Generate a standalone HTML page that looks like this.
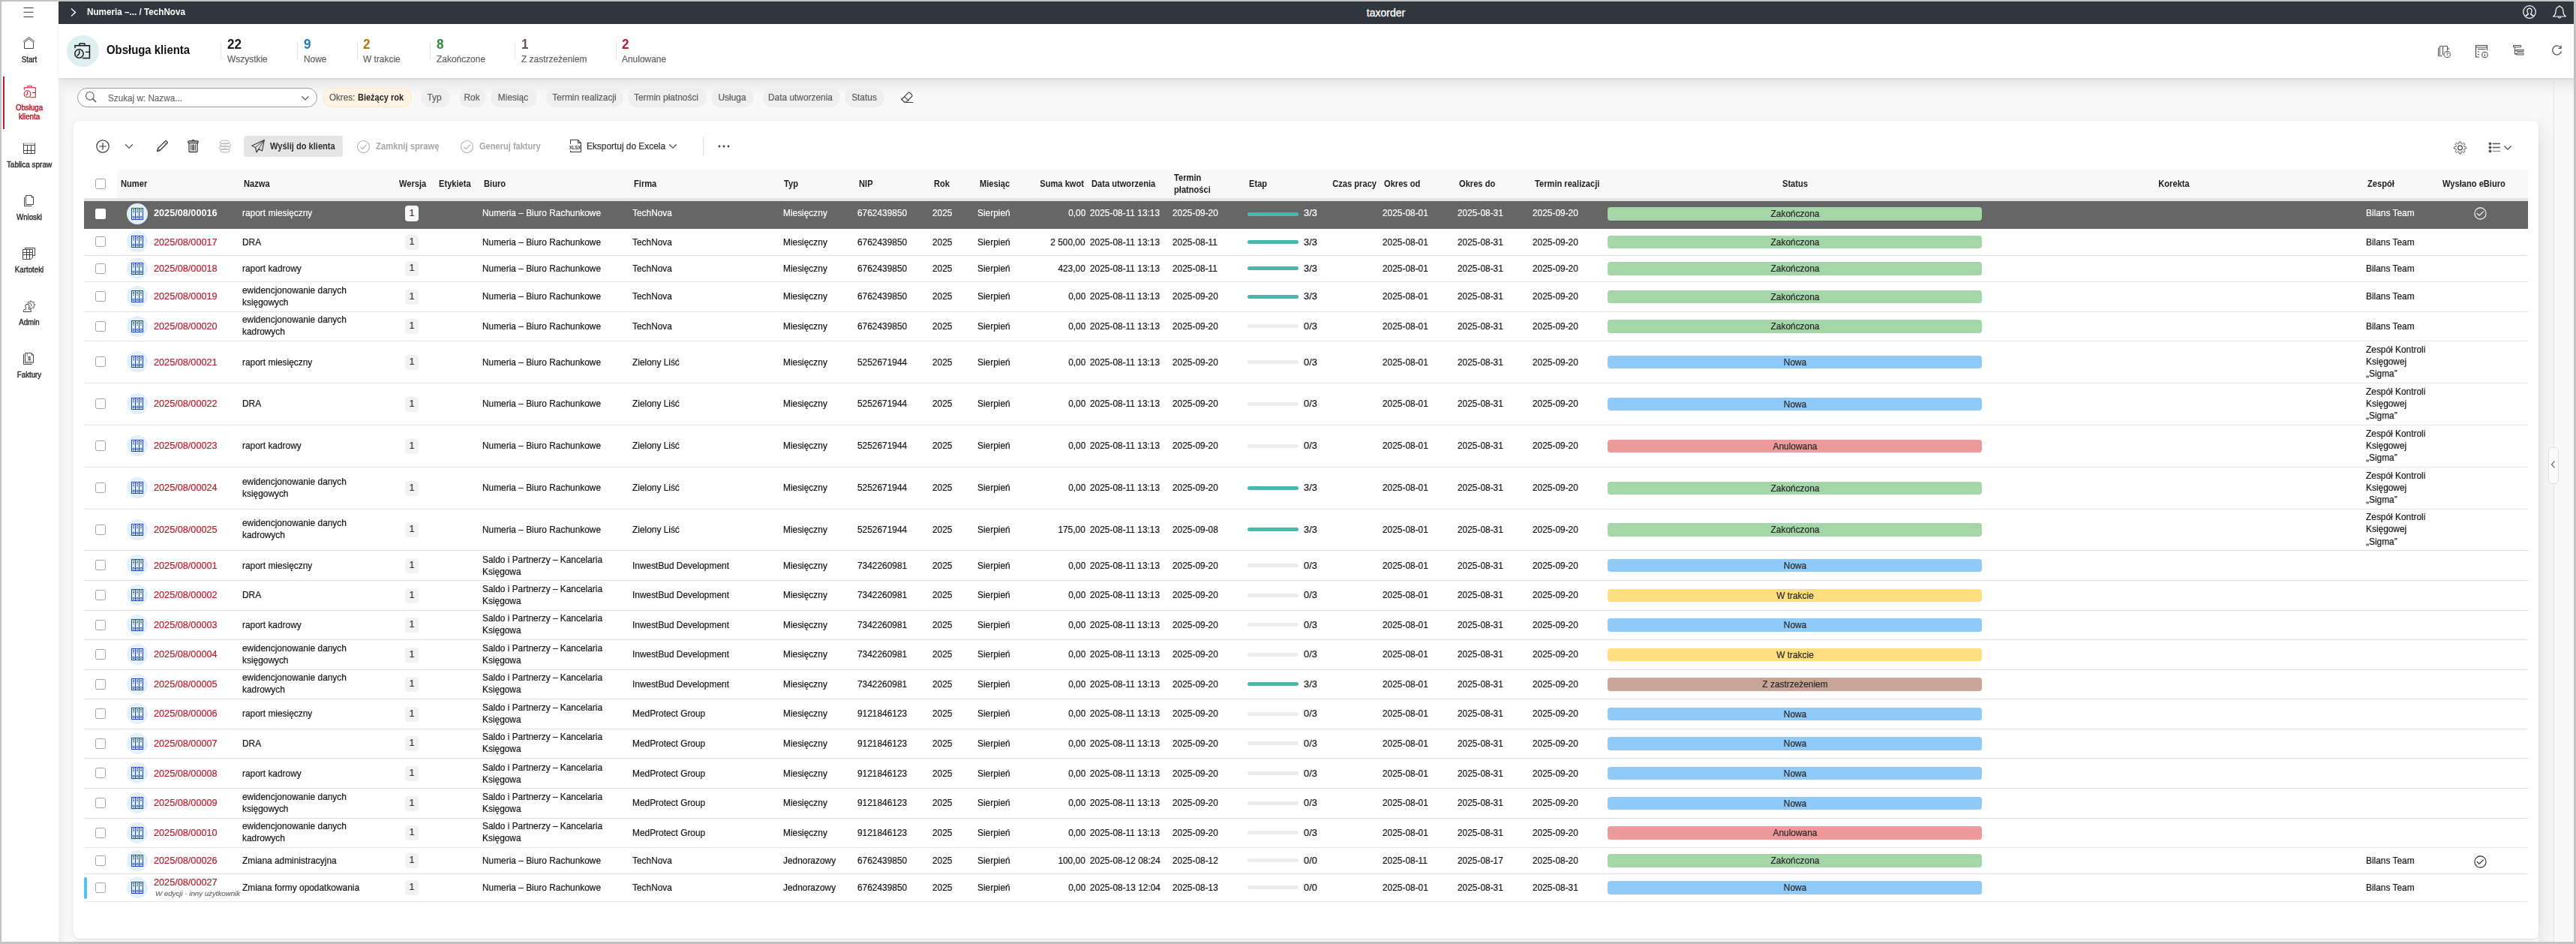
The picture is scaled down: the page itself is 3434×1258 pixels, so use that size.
<!DOCTYPE html><html><head><meta charset="utf-8"><style>
html,body{margin:0;padding:0}
body{width:3434px;height:1258px;position:relative;overflow:hidden;background:#c3c3c3;font-family:"Liberation Sans",sans-serif;}
.t{position:absolute;white-space:nowrap;-webkit-text-stroke:0.2px currentColor;}
.b{position:absolute;box-sizing:border-box;}
</style></head><body>
<div class="b" style="left:2.00px;top:2.00px;width:3429.00px;height:1253.00px;background:#f9f9f9;"></div>
<div class="b" style="left:78.00px;top:104.00px;width:3353.00px;height:22.00px;background:linear-gradient(#e6e6e6,#f9f9f9);"></div>
<div class="b" style="left:78.00px;top:104.00px;width:12.00px;height:1151.00px;background:linear-gradient(90deg,#efefef,rgba(249,249,249,0));"></div>
<div class="b" style="left:2.00px;top:2.00px;width:76.00px;height:1253.00px;background:#ffffff;"></div>
<div class="b" style="left:78.00px;top:2.00px;width:3353.00px;height:30.00px;background:#2f363d;"></div>
<div class="b" style="left:78.00px;top:32.00px;width:3353.00px;height:72.00px;background:#ffffff;box-shadow:0 1px 3px rgba(0,0,0,0.10);"></div>
<div class="b" style="left:3384.00px;top:150.00px;width:20.00px;height:1105.00px;background:linear-gradient(90deg,#efefef,#f5f5f5);-webkit-mask-image:linear-gradient(transparent,#000 40px);"></div>
<div class="b" style="left:3404.00px;top:104.00px;width:1.00px;height:1151.00px;background:#e2e2e2;"></div>
<div class="b" style="left:98.00px;top:161.00px;width:3286.00px;height:1090.00px;background:#ffffff;border-radius:8px;box-shadow:0 1px 2px rgba(0,0,0,0.10),0 0 14px rgba(0,0,0,0.05);"></div>
<svg class="b" style="left:30.00px;top:8.00px;" width="16" height="17" viewBox="0 0 16 17" fill="none"><path d="M1.5 2.5H14.5M1.5 8.3H14.5M1.5 14.5H14.5" stroke="#3a3a3a" stroke-width="1.1"/></svg>
<svg class="b" style="left:30.00px;top:48.00px;" width="18" height="18" viewBox="0 0 18 18" fill="none"><path d="M0.9 7.6L8.6 1.6L16.3 7.6M2.3 8.7L8.6 3.8L14.9 8.7" stroke="#454545" stroke-width="1"/><path d="M2.5 8V16.5H14.5V8" stroke="#454545" stroke-width="1"/></svg>
<div class="t" style="top:73.14px;font-size:10.8px;line-height:13.5px;color:#2a2a2a;left:-561.50px;width:1200px;text-align:center;transform-origin:50% 50%;transform:scaleX(0.9);-webkit-text-stroke:0.4px #2a2a2a;">Start</div>
<div class="b" style="left:4.00px;top:102.00px;width:2.00px;height:70.00px;background:#c1182c;"></div>
<svg class="b" style="left:31.00px;top:113.50px;" width="18" height="17" viewBox="0 0 21 21" fill="none"><path d="M6.5 3.2V1.8Q6.5 1 7.3 1H12.7Q13.5 1 13.5 1.8V3.2" stroke="#c1182c" stroke-width="1.3"/><path d="M1 7V3.5H19.5V19.5H10.5" stroke="#c1182c" stroke-width="1.3"/><circle cx="6.2" cy="13.8" r="5.4" stroke="#c1182c" stroke-width="1.3"/><path d="M6.4 9.8V13.9L3.6 16.6M14.2 11.8H19.5" stroke="#c1182c" stroke-width="1.3"/></svg>
<div class="t" style="top:137.44px;font-size:10.8px;line-height:13.5px;color:#c1182c;left:-560.70px;width:1200px;text-align:center;transform-origin:50% 50%;transform:scaleX(0.9);-webkit-text-stroke:0.45px #c1182c;">Obsługa</div>
<div class="t" style="top:149.04px;font-size:10.8px;line-height:13.5px;color:#c1182c;left:-560.70px;width:1200px;text-align:center;transform-origin:50% 50%;transform:scaleX(0.9);-webkit-text-stroke:0.45px #c1182c;">klienta</div>
<svg class="b" style="left:30.00px;top:190.00px;" width="18" height="16" viewBox="0 0 18 16" fill="none"><path d="M1.5 1V14.5H16.5V1" stroke="#454545" stroke-width="1"/><path d="M1.5 1H16.5" stroke="#454545" stroke-width="1" opacity="0.45"/><path d="M1.5 3.5H16.5M1.5 10.5H16.5M6.5 3.5V14.5M11.5 3.5V14.5" stroke="#454545" stroke-width="1"/></svg>
<div class="t" style="top:213.04px;font-size:10.8px;line-height:13.5px;color:#2a2a2a;left:-561.50px;width:1200px;text-align:center;transform-origin:50% 50%;transform:scaleX(0.92);-webkit-text-stroke:0.4px #2a2a2a;">Tablica spraw</div>
<svg class="b" style="left:30.00px;top:259.00px;" width="18" height="18" viewBox="0 0 18 18" fill="none"><path d="M4.5 1.5H12L14.5 4V13.5H4.5Z" stroke="#454545" stroke-width="1" stroke-linejoin="round"/><path d="M12 1.5V4H14.5M2.5 3.5V15.5H12.5" stroke="#454545" stroke-width="1"/></svg>
<div class="t" style="top:282.94px;font-size:10.8px;line-height:13.5px;color:#2a2a2a;left:-561.50px;width:1200px;text-align:center;transform-origin:50% 50%;transform:scaleX(0.9);-webkit-text-stroke:0.4px #2a2a2a;">Wnioski</div>
<svg class="b" style="left:30.00px;top:329.00px;" width="18" height="18" viewBox="0 0 18 18" fill="none"><path d="M0.5 3.5H13.5V14L11.5 16.5H0.5Z" stroke="#454545" stroke-width="1"/><path d="M0.5 7.5H13.5M0.5 10.5H13.5M5.5 3.5V16.5M9.5 3.5V16.5M3.5 3.5V1.5H16.5V11.5H13.5" stroke="#454545" stroke-width="1"/></svg>
<div class="t" style="top:352.74px;font-size:10.8px;line-height:13.5px;color:#2a2a2a;left:-561.50px;width:1200px;text-align:center;transform-origin:50% 50%;transform:scaleX(0.9);-webkit-text-stroke:0.4px #2a2a2a;">Kartoteki</div>
<svg class="b" style="left:30.00px;top:399.00px;" width="18" height="18" viewBox="0 0 18 18" fill="none"><path d="M16.60 7.30L16.55 7.99L15.16 8.34L15.00 8.83L14.76 9.30L15.50 10.53L15.05 11.05L14.53 11.50L13.30 10.76L12.83 11.00L12.34 11.16L11.99 12.55L11.30 12.60L10.61 12.55L10.26 11.16L9.77 11.00L9.30 10.76L8.07 11.50L7.55 11.05L7.10 10.53L7.84 9.30L7.60 8.83L7.44 8.34L6.05 7.99L6.00 7.30L6.05 6.61L7.44 6.26L7.60 5.77L7.84 5.30L7.10 4.07L7.55 3.55L8.07 3.10L9.30 3.84L9.77 3.60L10.26 3.44L10.61 2.05L11.30 2.00L11.99 2.05L12.34 3.44L12.83 3.60L13.30 3.84L14.53 3.10L15.05 3.55L15.50 4.07L14.76 5.30L15.00 5.77L15.16 6.26L16.55 6.61Z" stroke="#454545" stroke-width="1" stroke-linejoin="round"/><path d="M9.2 5.4Q11.2 4.8 11.8 6.8Q12.2 8.6 10.5 9.6" stroke="#454545" stroke-width="1"/><path d="M1.2 16.5V15.2Q1.2 13.6 3 13.4L4.6 13.1V11.8Q4 10.8 4 9.2V7.9Q4 6.5 6.4 6.5Q8.8 6.5 8.8 7.9V9.2Q8.8 10.8 8.2 11.8V13.1L9.8 13.4Q11.4 13.6 11.4 15.2V16.5Z" fill="#ffffff" stroke="#454545" stroke-width="1" stroke-linejoin="round"/></svg>
<div class="t" style="top:422.64px;font-size:10.8px;line-height:13.5px;color:#2a2a2a;left:-561.50px;width:1200px;text-align:center;transform-origin:50% 50%;transform:scaleX(0.9);-webkit-text-stroke:0.4px #2a2a2a;">Admin</div>
<svg class="b" style="left:30.00px;top:469.00px;" width="18" height="18" viewBox="0 0 18 18" fill="none"><path d="M3.5 1.5H12L14.5 4V14.5H3.5Z" stroke="#454545" stroke-width="1" stroke-linejoin="round"/><path d="M12 1.5V4H14.5M1.5 3V16.5H12.5M5.5 3H7M5.5 5H7" stroke="#454545" stroke-width="1"/><path d="M5 12.5H13" stroke="#454545" stroke-width="1" opacity="0.5"/><text x="9" y="11" font-size="7.5" font-weight="700" text-anchor="middle" fill="#454545" font-family="Liberation Sans">$</text></svg>
<div class="t" style="top:492.54px;font-size:10.8px;line-height:13.5px;color:#2a2a2a;left:-561.50px;width:1200px;text-align:center;transform-origin:50% 50%;transform:scaleX(0.9);-webkit-text-stroke:0.4px #2a2a2a;">Faktury</div>
<svg class="b" style="left:92.00px;top:10.00px;" width="12" height="13" viewBox="0 0 12 13" fill="none"><path d="M3 1.5L8.5 6.5L3 11.5" stroke="#ffffff" stroke-width="1.4"/></svg>
<div class="t" style="top:7.71px;font-size:13px;line-height:16.25px;color:#ffffff;font-weight:700;-webkit-text-stroke:0;left:115.80px;transform-origin:0 50%;transform:scaleX(0.899);">Numeria –... / TechNova</div>
<div class="t" style="top:8.50px;font-size:14px;line-height:17.5px;color:#ffffff;left:1247.50px;width:1200px;text-align:center;transform-origin:50% 50%;-webkit-text-stroke:0.3px #ffffff;">taxorder</div>
<svg class="b" style="left:3362.00px;top:6.00px;" width="20" height="20" viewBox="0 0 20 20" fill="none"><circle cx="10" cy="10" r="8.3" stroke="#fff" stroke-width="1.2"/><path d="M6.5 15.5V13.8L8.6 12.6Q7 11.2 7 8.6Q7 5.2 10 5.2Q13 5.2 13 8.6Q13 11.2 11.4 12.6L13.5 13.8V15.5M4.2 15.3Q6.5 13.8 8.6 13.2M15.8 15.3Q13.5 13.8 11.4 13.2" stroke="#fff" stroke-width="1.2" stroke-linejoin="round"/></svg>
<svg class="b" style="left:3402.00px;top:6.00px;" width="20" height="20" viewBox="0 0 20 20" fill="none"><path d="M10 1.8Q11 1.8 11 3Q15 4 15 9.5Q15 13.5 18.5 16H1.5Q5 13.5 5 9.5Q5 4 9 3Q9 1.8 10 1.8Z" stroke="#fff" stroke-width="1.2" stroke-linejoin="round"/><path d="M8.3 16.5Q8.3 18 10 18Q11.7 18 11.7 16.5" stroke="#fff" stroke-width="1.2"/></svg>
<div class="b" style="left:89.00px;top:47.00px;width:43.00px;height:42.00px;background:#ddeff0;border-radius:50%;"></div>
<svg class="b" style="left:99.00px;top:57.00px;" width="22" height="22" viewBox="0 0 21 21" fill="none"><path d="M6.5 3.2V1.8Q6.5 1 7.3 1H12.7Q13.5 1 13.5 1.8V3.2" stroke="#111111" stroke-width="1.4"/><path d="M1 7V3.5H19.5V19.5H10.5" stroke="#111111" stroke-width="1.4"/><circle cx="6.2" cy="13.8" r="5.4" stroke="#111111" stroke-width="1.4"/><path d="M6.4 9.8V13.9L3.6 16.6M14.2 11.8H19.5" stroke="#111111" stroke-width="1.4"/></svg>
<div class="t" style="top:57.29px;font-size:16px;line-height:20.0px;color:#111111;font-weight:700;-webkit-text-stroke:0;left:142.00px;transform-origin:0 50%;transform:scaleX(0.932);">Obsługa klienta</div>
<div class="b" style="left:294.40px;top:56.00px;width:1.00px;height:24.00px;background:#e3e3e3;"></div>
<div class="t" style="top:47.67px;font-size:18px;line-height:22.5px;color:#1b1b1b;font-weight:700;-webkit-text-stroke:0;left:302.70px;transform-origin:0 50%;transform:scaleX(0.95);">22</div>
<div class="t" style="top:71.21px;font-size:13px;line-height:16.25px;color:#616161;left:302.70px;transform-origin:0 50%;transform:scaleX(0.918);">Wszystkie</div>
<div class="b" style="left:396.20px;top:56.00px;width:1.00px;height:24.00px;background:#e3e3e3;"></div>
<div class="t" style="top:47.67px;font-size:18px;line-height:22.5px;color:#1d79b8;font-weight:700;-webkit-text-stroke:0;left:404.50px;transform-origin:0 50%;transform:scaleX(0.95);">9</div>
<div class="t" style="top:71.21px;font-size:13px;line-height:16.25px;color:#616161;left:404.50px;transform-origin:0 50%;transform:scaleX(0.918);">Nowe</div>
<div class="b" style="left:475.70px;top:56.00px;width:1.00px;height:24.00px;background:#e3e3e3;"></div>
<div class="t" style="top:47.67px;font-size:18px;line-height:22.5px;color:#b8750c;font-weight:700;-webkit-text-stroke:0;left:484.00px;transform-origin:0 50%;transform:scaleX(0.95);">2</div>
<div class="t" style="top:71.21px;font-size:13px;line-height:16.25px;color:#616161;left:484.00px;transform-origin:0 50%;transform:scaleX(0.918);">W trakcie</div>
<div class="b" style="left:573.40px;top:56.00px;width:1.00px;height:24.00px;background:#e3e3e3;"></div>
<div class="t" style="top:47.67px;font-size:18px;line-height:22.5px;color:#2f8a3c;font-weight:700;-webkit-text-stroke:0;left:581.70px;transform-origin:0 50%;transform:scaleX(0.95);">8</div>
<div class="t" style="top:71.21px;font-size:13px;line-height:16.25px;color:#616161;left:581.70px;transform-origin:0 50%;transform:scaleX(0.918);">Zakończone</div>
<div class="b" style="left:686.30px;top:56.00px;width:1.00px;height:24.00px;background:#e3e3e3;"></div>
<div class="t" style="top:47.67px;font-size:18px;line-height:22.5px;color:#6b5252;font-weight:700;-webkit-text-stroke:0;left:694.60px;transform-origin:0 50%;transform:scaleX(0.95);">1</div>
<div class="t" style="top:71.21px;font-size:13px;line-height:16.25px;color:#616161;left:694.60px;transform-origin:0 50%;transform:scaleX(0.918);">Z zastrzeżeniem</div>
<div class="b" style="left:821.00px;top:56.00px;width:1.00px;height:24.00px;background:#e3e3e3;"></div>
<div class="t" style="top:47.67px;font-size:18px;line-height:22.5px;color:#c1182c;font-weight:700;-webkit-text-stroke:0;left:829.30px;transform-origin:0 50%;transform:scaleX(0.95);">2</div>
<div class="t" style="top:71.21px;font-size:13px;line-height:16.25px;color:#616161;left:829.30px;transform-origin:0 50%;transform:scaleX(0.918);">Anulowane</div>
<svg class="b" style="left:3248.00px;top:59.00px;" width="22" height="20" viewBox="0 0 22 20" fill="none"><path d="M2.5 4.5V15.5H7.5" stroke="#4a4a4a" stroke-width="1"/><path d="M4.5 14V2.5Q7 1.8 8.5 3Q10.5 1.8 14.5 2.5V8.5M8.5 3V14" stroke="#4a4a4a" stroke-width="1"/><path d="M16.2 4.5V7.5" stroke="#4a4a4a" stroke-width="1"/><circle cx="14.2" cy="13.5" r="4.1" stroke="#4a4a4a" stroke-width="1"/><path d="M12.9 12.3Q12.9 11 14.2 11Q15.5 11 15.5 12.2Q15.5 13.1 14.2 13.7V14.6M14.2 15.6V16.2" stroke="#4a4a4a" stroke-width="0.9"/></svg>
<svg class="b" style="left:3299.00px;top:59.00px;" width="20" height="19" viewBox="0 0 20 19" fill="none"><path d="M1.5 11V17H6M1.5 11V1.5H16.5V8" stroke="#4a4a4a" stroke-width="1.2"/><path d="M1.5 4H16.5M4 6.5H14.5M4 10H6M4 13.5H6" stroke="#4a4a4a" stroke-width="1.2"/><circle cx="13.5" cy="14" r="3.8" stroke="#4a4a4a" stroke-width="1.1"/><path d="M13.5 13V16.2M13.5 11.4V11.9" stroke="#4a4a4a" stroke-width="1"/></svg>
<svg class="b" style="left:3349.00px;top:59.00px;" width="18" height="17" viewBox="0 0 18 17" fill="none"><rect x="1.5" y="1.5" width="10" height="2.2" rx="0.6" stroke="#4a4a4a" stroke-width="1.1"/><rect x="6" y="7.2" width="9" height="2.2" rx="0.6" stroke="#4a4a4a" stroke-width="1.1"/><rect x="6" y="11.8" width="9" height="2.2" rx="0.6" stroke="#4a4a4a" stroke-width="1.1"/><path d="M3.5 3.7V12.9H6M3.5 8.3H6" stroke="#4a4a4a" stroke-width="1.1"/></svg>
<svg class="b" style="left:3400.00px;top:59.00px;" width="17" height="17" viewBox="0 0 17 17" fill="none"><path d="M13.8 4.8A6 6 0 1 0 14.5 9.5" stroke="#4a4a4a" stroke-width="1.2"/><path d="M14 1.8V5.3H10.5" stroke="#4a4a4a" stroke-width="1.2"/></svg>
<div class="b" style="left:103.00px;top:117.00px;width:320.00px;height:26.00px;background:#ffffff;border:1px solid #9a9a9a;border-radius:13px;"></div>
<svg class="b" style="left:112.00px;top:120.00px;" width="20" height="20" viewBox="0 0 20 20" fill="none"><circle cx="7.8" cy="7.8" r="5.3" stroke="#555" stroke-width="1.1"/><path d="M11.6 11.6L16 16" stroke="#555" stroke-width="1.6"/></svg>
<div class="t" style="top:122.71px;font-size:13px;line-height:16.25px;color:#6b6b6b;left:144.00px;transform-origin:0 50%;transform:scaleX(0.901);">Szukaj w: Nazwa...</div>
<svg class="b" style="left:401.00px;top:126.00px;" width="12" height="9" viewBox="0 0 12 9" fill="none"><path d="M1.5 2.5L6 7L10.5 2.5" stroke="#555" stroke-width="1.1"/></svg>
<div class="b" style="left:429.50px;top:117.00px;width:119.10px;height:26.00px;background:#fff4e3;border:1px solid #fce7c3;border-radius:13px;"></div>
<div class="t" style="top:122.31px;font-size:13px;line-height:16.25px;color:#5a5a5a;left:439.30px;transform-origin:0 50%;transform:scaleX(0.895);">Okres:</div>
<div class="t" style="top:122.31px;font-size:13px;line-height:16.25px;color:#1f1f1f;font-weight:700;-webkit-text-stroke:0;left:476.80px;transform-origin:0 50%;transform:scaleX(0.845);">Bieżący rok</div>
<div class="b" style="left:560.70px;top:117.00px;width:39.10px;height:26.00px;background:#efefef;border-radius:13px;"></div>
<div class="t" style="top:122.31px;font-size:13px;line-height:16.25px;color:#5c5c5c;left:-20.55px;width:1200px;text-align:center;transform-origin:50% 50%;transform:scaleX(0.915);">Typ</div>
<div class="b" style="left:611.90px;top:117.00px;width:35.80px;height:26.00px;background:#efefef;border-radius:13px;"></div>
<div class="t" style="top:122.31px;font-size:13px;line-height:16.25px;color:#5c5c5c;left:29.00px;width:1200px;text-align:center;transform-origin:50% 50%;transform:scaleX(0.915);">Rok</div>
<div class="b" style="left:654.00px;top:117.00px;width:61.50px;height:26.00px;background:#efefef;border-radius:13px;"></div>
<div class="t" style="top:122.31px;font-size:13px;line-height:16.25px;color:#5c5c5c;left:83.95px;width:1200px;text-align:center;transform-origin:50% 50%;transform:scaleX(0.915);">Miesiąc</div>
<div class="b" style="left:728.00px;top:117.00px;width:102.60px;height:26.00px;background:#efefef;border-radius:13px;"></div>
<div class="t" style="top:122.31px;font-size:13px;line-height:16.25px;color:#5c5c5c;left:178.50px;width:1200px;text-align:center;transform-origin:50% 50%;transform:scaleX(0.915);">Termin realizacji</div>
<div class="b" style="left:836.80px;top:117.00px;width:104.80px;height:26.00px;background:#efefef;border-radius:13px;"></div>
<div class="t" style="top:122.31px;font-size:13px;line-height:16.25px;color:#5c5c5c;left:288.40px;width:1200px;text-align:center;transform-origin:50% 50%;transform:scaleX(0.915);">Termin płatności</div>
<div class="b" style="left:947.80px;top:117.00px;width:57.20px;height:26.00px;background:#efefef;border-radius:13px;"></div>
<div class="t" style="top:122.31px;font-size:13px;line-height:16.25px;color:#5c5c5c;left:375.60px;width:1200px;text-align:center;transform-origin:50% 50%;transform:scaleX(0.915);">Usługa</div>
<div class="b" style="left:1016.60px;top:117.00px;width:103.20px;height:26.00px;background:#efefef;border-radius:13px;"></div>
<div class="t" style="top:122.31px;font-size:13px;line-height:16.25px;color:#5c5c5c;left:467.40px;width:1200px;text-align:center;transform-origin:50% 50%;transform:scaleX(0.915);">Data utworzenia</div>
<div class="b" style="left:1126.00px;top:117.00px;width:53.40px;height:26.00px;background:#efefef;border-radius:13px;"></div>
<div class="t" style="top:122.31px;font-size:13px;line-height:16.25px;color:#5c5c5c;left:551.90px;width:1200px;text-align:center;transform-origin:50% 50%;transform:scaleX(0.915);">Status</div>
<svg class="b" style="left:1199.00px;top:119.00px;" width="21" height="21" viewBox="0 0 21 21" fill="none"><path d="M3 13.5L11.8 4.7Q12.8 3.7 13.8 4.7L16.6 7.5Q17.6 8.5 16.6 9.5L9 17.2H6.6L3 13.5Q2 12.5 3 13.5Z" stroke="#444" stroke-width="1.2" stroke-linejoin="round"/><path d="M6.6 17.5H18.5M6.8 9.8L12.6 15.6" stroke="#444" stroke-width="1.2"/></svg>
<svg class="b" style="left:127.00px;top:185.00px;" width="20" height="20" viewBox="0 0 20 20" fill="none"><circle cx="10" cy="10" r="8.2" stroke="#3d3d3d" stroke-width="1.2"/><path d="M10 5.2V14.8M5.2 10H14.8" stroke="#3d3d3d" stroke-width="1.2"/></svg>
<svg class="b" style="left:166.00px;top:191.00px;" width="12" height="8" viewBox="0 0 12 8" fill="none"><path d="M1.2 1.5L6 6.3L10.8 1.5" stroke="#3d3d3d" stroke-width="1.1"/></svg>
<svg class="b" style="left:207.00px;top:186.00px;" width="18" height="18" viewBox="0 0 18 18" fill="none"><path d="M2.5 15.5L3.5 11.8L13.2 2.1Q14 1.3 14.8 2.1L15.9 3.2Q16.7 4 15.9 4.8L6.2 14.5Z" stroke="#3d3d3d" stroke-width="1.3" stroke-linejoin="round"/><path d="M12 3.3L14.7 6M3.5 11.8L6.2 14.5" stroke="#3d3d3d" stroke-width="1"/></svg>
<svg class="b" style="left:249.00px;top:185.00px;" width="17" height="19" viewBox="0 0 17 19" fill="none"><path d="M3 5.5V16.5Q3 17.5 4 17.5H13Q14 17.5 14 16.5V5.5" stroke="#3d3d3d" stroke-width="1.3"/><rect x="1.8" y="3" width="13.4" height="2.5" rx="1" stroke="#3d3d3d" stroke-width="1.3"/><path d="M7 3V1.5H10V3M5.5 7.5V15.5M7.2 7.5V15.5M8.5 7.5V15.5M9.8 7.5V15.5M11.5 7.5V15.5" stroke="#3d3d3d" stroke-width="0.9"/></svg>
<svg class="b" style="left:290.00px;top:186.00px;" width="20" height="18" viewBox="0 0 20 18" fill="none"><ellipse cx="9.5" cy="3.5" rx="6.5" ry="2.4" stroke="#b3b3b3" stroke-width="1"/><ellipse cx="10.5" cy="7.3" rx="7.5" ry="2.4" stroke="#b3b3b3" stroke-width="1"/><ellipse cx="9.5" cy="11" rx="7.5" ry="2.4" stroke="#b3b3b3" stroke-width="1"/><ellipse cx="10" cy="14.6" rx="6.5" ry="2.4" stroke="#b3b3b3" stroke-width="1"/></svg>
<div class="b" style="left:325.20px;top:181.20px;width:131.60px;height:27.40px;background:#e5e5e5;border-radius:4px;"></div>
<svg class="b" style="left:334.00px;top:185.00px;" width="20" height="20" viewBox="0 0 20 20" fill="none"><path d="M18.3 1.5L1.8 9.3L6.5 11.5L8 18L10.8 13.6L15.5 16Z" stroke="#3d3d3d" stroke-width="1.2" stroke-linejoin="round"/><path d="M6.5 11.5L18.3 1.5L8 18" stroke="#3d3d3d" stroke-width="1"/></svg>
<div class="t" style="top:186.61px;font-size:13px;line-height:16.25px;color:#2e2e2e;font-weight:700;-webkit-text-stroke:0;left:360.20px;transform-origin:0 50%;transform:scaleX(0.853);">Wyślij do klienta</div>
<svg class="b" style="left:475.00px;top:186.00px;" width="19" height="19" viewBox="0 0 19 19" fill="none"><circle cx="9.5" cy="9.5" r="8" stroke="#b0b0b0" stroke-width="1.1"/><path d="M5.5 9.8L8.3 12.6L13.6 6.8" stroke="#b0b0b0" stroke-width="1.1"/></svg>
<div class="t" style="top:186.61px;font-size:13px;line-height:16.25px;color:#a7a7a7;font-weight:700;-webkit-text-stroke:0;left:500.50px;transform-origin:0 50%;transform:scaleX(0.866);">Zamknij sprawę</div>
<svg class="b" style="left:613.00px;top:186.00px;" width="19" height="19" viewBox="0 0 19 19" fill="none"><circle cx="9.5" cy="9.5" r="8" stroke="#b0b0b0" stroke-width="1.1"/><path d="M5.5 9.8L8.3 12.6L13.6 6.8" stroke="#b0b0b0" stroke-width="1.1"/></svg>
<div class="t" style="top:186.61px;font-size:13px;line-height:16.25px;color:#a7a7a7;font-weight:700;-webkit-text-stroke:0;left:638.60px;transform-origin:0 50%;transform:scaleX(0.851);">Generuj faktury</div>
<svg class="b" style="left:756.00px;top:185.00px;" width="21" height="19" viewBox="0 0 21 19" fill="none"><path d="M4.5 7V1.5H14.5L18.5 5.5V17.5H4.5V15.5M14.5 1.5V5.5H18.5" stroke="#3d3d3d" stroke-width="1.1"/><text x="10.5" y="14" font-size="6.3" font-weight="700" text-anchor="middle" fill="#3d3d3d" font-family="Liberation Sans" transform="translate(10.5 0) scale(0.95 1) translate(-10.5 0)">XLSX</text></svg>
<div class="t" style="top:186.61px;font-size:13px;line-height:16.25px;color:#2e2e2e;left:782.40px;transform-origin:0 50%;transform:scaleX(0.914);">Eksportuj do Excela</div>
<svg class="b" style="left:891.00px;top:191.00px;" width="12" height="8" viewBox="0 0 12 8" fill="none"><path d="M1.2 1.5L6 6.3L10.8 1.5" stroke="#3d3d3d" stroke-width="1.1"/></svg>
<div class="b" style="left:937.00px;top:182.00px;width:1.00px;height:26.00px;background:#dcdcdc;"></div>
<svg class="b" style="left:956.00px;top:192.00px;" width="18" height="6" viewBox="0 0 18 6" fill="none"><circle cx="3" cy="3" r="1.4" fill="#3d3d3d"/><circle cx="9" cy="3" r="1.4" fill="#3d3d3d"/><circle cx="15" cy="3" r="1.4" fill="#3d3d3d"/></svg>
<svg class="b" style="left:3270.00px;top:188.00px;" width="19" height="18" viewBox="0 0 19 18" fill="none"><path d="M17.65 9.00L17.64 9.32L17.62 9.64L17.59 9.96L17.15 10.21L16.27 10.35L15.38 10.41L14.94 10.53L14.87 10.75L14.80 10.96L14.72 11.16L14.63 11.37L14.53 11.57L14.43 11.76L14.66 12.16L15.24 12.83L15.77 13.56L15.90 14.05L15.70 14.29L15.48 14.53L15.26 14.76L15.03 14.98L14.79 15.20L14.55 15.40L14.06 15.27L13.33 14.74L12.66 14.16L12.26 13.93L12.07 14.03L11.87 14.13L11.66 14.22L11.46 14.30L11.25 14.37L11.03 14.44L10.91 14.88L10.85 15.77L10.71 16.65L10.46 17.09L10.14 17.12L9.82 17.14L9.50 17.15L9.18 17.14L8.86 17.12L8.54 17.09L8.29 16.65L8.15 15.77L8.09 14.88L7.97 14.44L7.75 14.37L7.54 14.30L7.34 14.22L7.13 14.13L6.93 14.03L6.74 13.93L6.34 14.16L5.67 14.74L4.94 15.27L4.45 15.40L4.21 15.20L3.97 14.98L3.74 14.76L3.52 14.53L3.30 14.29L3.10 14.05L3.23 13.56L3.76 12.83L4.34 12.16L4.57 11.76L4.47 11.57L4.37 11.37L4.28 11.16L4.20 10.96L4.13 10.75L4.06 10.53L3.62 10.41L2.73 10.35L1.85 10.21L1.41 9.96L1.38 9.64L1.36 9.32L1.35 9.00L1.36 8.68L1.38 8.36L1.41 8.04L1.85 7.79L2.73 7.65L3.62 7.59L4.06 7.47L4.13 7.25L4.20 7.04L4.28 6.84L4.37 6.63L4.47 6.43L4.57 6.24L4.34 5.84L3.76 5.17L3.23 4.44L3.10 3.95L3.30 3.71L3.52 3.47L3.74 3.24L3.97 3.02L4.21 2.80L4.45 2.60L4.94 2.73L5.67 3.26L6.34 3.84L6.74 4.07L6.93 3.97L7.13 3.87L7.34 3.78L7.54 3.70L7.75 3.63L7.97 3.56L8.09 3.12L8.15 2.23L8.29 1.35L8.54 0.91L8.86 0.88L9.18 0.86L9.50 0.85L9.82 0.86L10.14 0.88L10.46 0.91L10.71 1.35L10.85 2.23L10.91 3.12L11.03 3.56L11.25 3.63L11.46 3.70L11.66 3.78L11.87 3.87L12.07 3.97L12.26 4.07L12.66 3.84L13.33 3.26L14.06 2.73L14.55 2.60L14.79 2.80L15.03 3.02L15.26 3.24L15.48 3.47L15.70 3.71L15.90 3.95L15.77 4.44L15.24 5.17L14.66 5.84L14.43 6.24L14.53 6.43L14.63 6.63L14.72 6.84L14.80 7.04L14.87 7.25L14.94 7.47L15.38 7.59L16.27 7.65L17.15 7.79L17.59 8.04L17.62 8.36L17.64 8.68Z" stroke="#3d3d3d" stroke-width="1" stroke-linejoin="round"/><circle cx="9.5" cy="9" r="2.9" stroke="#3d3d3d" stroke-width="1.1"/></svg>
<svg class="b" style="left:3317.00px;top:189.00px;" width="18" height="16" viewBox="0 0 18 16" fill="none"><circle cx="2.5" cy="2.5" r="1.7" fill="#444" stroke="#777" stroke-width="0.6"/><circle cx="2.5" cy="7.5" r="1.7" fill="#444" stroke="#777" stroke-width="0.6"/><circle cx="2.5" cy="12.5" r="1.7" fill="#444" stroke="#777" stroke-width="0.6"/><path d="M5.8 2.5H16M5.8 7.5H16" stroke="#555" stroke-width="1.3"/><path d="M5.8 12.5H16" stroke="#8a8a8a" stroke-width="1.3"/></svg>
<svg class="b" style="left:3337.00px;top:193.00px;" width="12" height="8" viewBox="0 0 12 8" fill="none"><path d="M1.5 1.5L6 6.2L10.5 1.5" stroke="#3d3d3d" stroke-width="1.1"/></svg>
<div class="b" style="left:156.00px;top:227.00px;width:3214.00px;height:37.00px;background:#f8f8f8;"></div>
<div class="b" style="left:112.00px;top:264.00px;width:3258.00px;height:4.00px;background:#e4e4e4;"></div>
<div class="b" style="left:127.00px;top:238.00px;width:14.00px;height:14.00px;background:#ffffff;border:1.3px solid #a3a3a3;border-radius:2.5px;"></div>
<div class="t" style="top:237.72px;font-size:12.5px;line-height:15.62px;color:#1e1e1e;font-weight:700;-webkit-text-stroke:0;left:161.30px;transform-origin:0 50%;transform:scaleX(0.89);">Numer</div>
<div class="t" style="top:237.72px;font-size:12.5px;line-height:15.62px;color:#1e1e1e;font-weight:700;-webkit-text-stroke:0;left:324.90px;transform-origin:0 50%;transform:scaleX(0.89);">Nazwa</div>
<div class="t" style="top:237.72px;font-size:12.5px;line-height:15.62px;color:#1e1e1e;font-weight:700;-webkit-text-stroke:0;left:532.00px;transform-origin:0 50%;transform:scaleX(0.89);">Wersja</div>
<div class="t" style="top:237.72px;font-size:12.5px;line-height:15.62px;color:#1e1e1e;font-weight:700;-webkit-text-stroke:0;left:584.70px;transform-origin:0 50%;transform:scaleX(0.89);">Etykieta</div>
<div class="t" style="top:237.72px;font-size:12.5px;line-height:15.62px;color:#1e1e1e;font-weight:700;-webkit-text-stroke:0;left:644.90px;transform-origin:0 50%;transform:scaleX(0.89);">Biuro</div>
<div class="t" style="top:237.72px;font-size:12.5px;line-height:15.62px;color:#1e1e1e;font-weight:700;-webkit-text-stroke:0;left:845.20px;transform-origin:0 50%;transform:scaleX(0.89);">Firma</div>
<div class="t" style="top:237.72px;font-size:12.5px;line-height:15.62px;color:#1e1e1e;font-weight:700;-webkit-text-stroke:0;left:1045.40px;transform-origin:0 50%;transform:scaleX(0.89);">Typ</div>
<div class="t" style="top:237.72px;font-size:12.5px;line-height:15.62px;color:#1e1e1e;font-weight:700;-webkit-text-stroke:0;left:1144.90px;transform-origin:0 50%;transform:scaleX(0.89);">NIP</div>
<div class="t" style="top:237.72px;font-size:12.5px;line-height:15.62px;color:#1e1e1e;font-weight:700;-webkit-text-stroke:0;left:1245.20px;transform-origin:0 50%;transform:scaleX(0.89);">Rok</div>
<div class="t" style="top:237.72px;font-size:12.5px;line-height:15.62px;color:#1e1e1e;font-weight:700;-webkit-text-stroke:0;left:1305.50px;transform-origin:0 50%;transform:scaleX(0.89);">Miesiąc</div>
<div class="t" style="top:237.72px;font-size:12.5px;line-height:15.62px;color:#1e1e1e;font-weight:700;-webkit-text-stroke:0;left:1455.20px;transform-origin:0 50%;transform:scaleX(0.89);">Data utworzenia</div>
<div class="t" style="top:237.72px;font-size:12.5px;line-height:15.62px;color:#1e1e1e;font-weight:700;-webkit-text-stroke:0;left:1665.00px;transform-origin:0 50%;transform:scaleX(0.89);">Etap</div>
<div class="t" style="top:237.72px;font-size:12.5px;line-height:15.62px;color:#1e1e1e;font-weight:700;-webkit-text-stroke:0;left:1845.20px;transform-origin:0 50%;transform:scaleX(0.89);">Okres od</div>
<div class="t" style="top:237.72px;font-size:12.5px;line-height:15.62px;color:#1e1e1e;font-weight:700;-webkit-text-stroke:0;left:1945.00px;transform-origin:0 50%;transform:scaleX(0.89);">Okres do</div>
<div class="t" style="top:237.72px;font-size:12.5px;line-height:15.62px;color:#1e1e1e;font-weight:700;-webkit-text-stroke:0;left:2045.50px;transform-origin:0 50%;transform:scaleX(0.89);">Termin realizacji</div>
<div class="t" style="top:237.72px;font-size:12.5px;line-height:15.62px;color:#1e1e1e;font-weight:700;-webkit-text-stroke:0;left:3155.90px;transform-origin:0 50%;transform:scaleX(0.89);">Zespół</div>
<div class="t" style="top:237.72px;font-size:12.5px;line-height:15.62px;color:#1e1e1e;font-weight:700;-webkit-text-stroke:0;left:3255.90px;transform-origin:0 50%;transform:scaleX(0.89);">Wysłano eBiuro</div>
<div class="t" style="top:237.72px;font-size:12.5px;line-height:15.62px;color:#1e1e1e;font-weight:700;-webkit-text-stroke:0;right:1989.10px;text-align:right;transform-origin:100% 50%;transform:scaleX(0.89);">Suma kwot</div>
<div class="t" style="top:237.72px;font-size:12.5px;line-height:15.62px;color:#1e1e1e;font-weight:700;-webkit-text-stroke:0;right:1599.20px;text-align:right;transform-origin:100% 50%;transform:scaleX(0.89);">Czas pracy</div>
<div class="t" style="top:229.82px;font-size:12.5px;line-height:15.8px;color:#1e1e1e;font-weight:700;-webkit-text-stroke:0;left:1565.30px;transform-origin:0 50%;transform:scaleX(0.89);">Termin<br>płatności</div>
<div class="t" style="top:237.72px;font-size:12.5px;line-height:15.62px;color:#1e1e1e;font-weight:700;-webkit-text-stroke:0;left:1792.60px;width:1200px;text-align:center;transform-origin:50% 50%;transform:scaleX(0.89);">Status</div>
<div class="t" style="top:237.72px;font-size:12.5px;line-height:15.62px;color:#1e1e1e;font-weight:700;-webkit-text-stroke:0;left:2297.80px;width:1200px;text-align:center;transform-origin:50% 50%;transform:scaleX(0.89);">Korekta</div>
<div class="b" style="left:112.00px;top:268.00px;width:3258.00px;height:37.00px;background:#666666;"></div>
<div class="b" style="left:127.00px;top:278.00px;width:14.00px;height:14.00px;background:#ffffff;border-radius:2px;"></div>
<div class="b" style="left:169.00px;top:271.00px;width:28.00px;height:28.00px;background:#e3effb;border-radius:50%;"></div>
<svg class="b" style="left:175.00px;top:277.00px;" width="16" height="16" viewBox="0 0 16 16" fill="none"><rect x="0.5" y="0.5" width="15" height="15" stroke="#1c49ab" stroke-width="1"/><path d="M5.5 0.5V15.5M10.5 0.5V15.5" stroke="#1c49ab" stroke-width="1"/><path d="M2.0 2.5H4.0M2.0 4.5H4.0" stroke="#1c49ab" stroke-width="1"/><path d="M2.2 6.5H3.8" stroke="#1c49ab" stroke-width="0.8" opacity="0.7"/><circle cx="3.0" cy="12.4" r="1.25" stroke="#1c49ab" stroke-width="0.9"/><path d="M7.0 2.5H9.0M7.0 4.5H9.0" stroke="#1c49ab" stroke-width="1"/><path d="M7.2 6.5H8.8" stroke="#1c49ab" stroke-width="0.8" opacity="0.7"/><circle cx="8.0" cy="12.4" r="1.25" stroke="#1c49ab" stroke-width="0.9"/><path d="M12.0 2.5H14.0M12.0 4.5H14.0" stroke="#1c49ab" stroke-width="1"/><path d="M12.2 6.5H13.8" stroke="#1c49ab" stroke-width="0.8" opacity="0.7"/><circle cx="13.0" cy="12.4" r="1.25" stroke="#1c49ab" stroke-width="0.9"/></svg>
<div class="t" style="top:275.61px;font-size:13px;line-height:16.25px;color:#ffffff;font-weight:700;-webkit-text-stroke:0;left:205.00px;transform-origin:0 50%;transform:scaleX(0.975);">2025/08/00016</div>
<div class="t" style="top:275.73px;font-size:13px;line-height:16px;color:#ffffff;left:322.80px;transform-origin:0 50%;transform:scaleX(0.915);">raport miesięczny</div>
<div class="b" style="left:540.00px;top:274.00px;width:18.00px;height:21.00px;background:#f9f9f9;border-radius:4px;"></div>
<div class="t" style="top:277.42px;font-size:12.5px;line-height:15.62px;color:#333333;left:-51.00px;width:1200px;text-align:center;transform-origin:50% 50%;">1</div>
<div class="t" style="top:275.73px;font-size:13px;line-height:16px;color:#ffffff;left:643.30px;transform-origin:0 50%;transform:scaleX(0.915);">Numeria – Biuro Rachunkowe</div>
<div class="t" style="top:275.61px;font-size:13px;line-height:16.25px;color:#ffffff;left:843.30px;transform-origin:0 50%;transform:scaleX(0.915);">TechNova</div>
<div class="t" style="top:275.61px;font-size:13px;line-height:16.25px;color:#ffffff;left:1043.50px;transform-origin:0 50%;transform:scaleX(0.915);">Miesięczny</div>
<div class="t" style="top:275.61px;font-size:13px;line-height:16.25px;color:#ffffff;left:1143.30px;transform-origin:0 50%;transform:scaleX(0.915);">6762439850</div>
<div class="t" style="top:275.61px;font-size:13px;line-height:16.25px;color:#ffffff;left:1242.70px;transform-origin:0 50%;transform:scaleX(0.915);">2025</div>
<div class="t" style="top:275.61px;font-size:13px;line-height:16.25px;color:#ffffff;left:1303.00px;transform-origin:0 50%;transform:scaleX(0.915);">Sierpień</div>
<div class="t" style="top:275.61px;font-size:13px;line-height:16.25px;color:#ffffff;right:1987.00px;text-align:right;transform-origin:100% 50%;transform:scaleX(0.915);">0,00</div>
<div class="t" style="top:275.61px;font-size:13px;line-height:16.25px;color:#ffffff;left:1453.00px;transform-origin:0 50%;transform:scaleX(0.915);">2025-08-11 13:13</div>
<div class="t" style="top:275.61px;font-size:13px;line-height:16.25px;color:#ffffff;left:1563.00px;transform-origin:0 50%;transform:scaleX(0.915);">2025-09-20</div>
<div class="b" style="left:1663.00px;top:282.70px;width:68.00px;height:5.00px;background:#4db6ac;border-radius:3px;"></div>
<div class="t" style="top:275.61px;font-size:13px;line-height:16.25px;color:#ffffff;left:1738.40px;transform-origin:0 50%;transform:scaleX(0.99);">3/3</div>
<div class="t" style="top:275.61px;font-size:13px;line-height:16.25px;color:#ffffff;left:1843.00px;transform-origin:0 50%;transform:scaleX(0.915);">2025-08-01</div>
<div class="t" style="top:275.61px;font-size:13px;line-height:16.25px;color:#ffffff;left:1943.00px;transform-origin:0 50%;transform:scaleX(0.915);">2025-08-31</div>
<div class="t" style="top:275.61px;font-size:13px;line-height:16.25px;color:#ffffff;left:2042.80px;transform-origin:0 50%;transform:scaleX(0.915);">2025-09-20</div>
<div class="b" style="left:2143.00px;top:276.40px;width:499.00px;height:17.60px;background:#a5d6a7;border-radius:4px;"></div>
<div class="t" style="top:276.51px;font-size:13px;line-height:16.25px;color:#262626;left:1792.50px;width:1200px;text-align:center;transform-origin:50% 50%;transform:scaleX(0.915);">Zakończona</div>
<div class="t" style="top:275.53px;font-size:13px;line-height:16.4px;color:#ffffff;left:3153.70px;transform-origin:0 50%;transform:scaleX(0.915);">Bilans Team</div>
<svg class="b" style="left:3296.50px;top:275.20px;" width="19" height="19" viewBox="0 0 19 19" fill="none"><circle cx="9.5" cy="9.5" r="7.6" stroke="#ffffff" stroke-width="1.1"/><path d="M4.8 9L8 12.2L13.8 6.6" stroke="#ffffff" stroke-width="1.1"/></svg>
<div class="b" style="left:112.00px;top:340.00px;width:3258.00px;height:1.00px;background:#e3e3e3;"></div>
<div class="b" style="left:127.00px;top:315.10px;width:14.00px;height:14.00px;background:#ffffff;border:1.3px solid #a3a3a3;border-radius:2.5px;"></div>
<div class="b" style="left:169.00px;top:308.10px;width:28.00px;height:28.00px;background:#e3effb;border-radius:50%;"></div>
<svg class="b" style="left:175.00px;top:314.10px;" width="16" height="16" viewBox="0 0 16 16" fill="none"><rect x="0.5" y="0.5" width="15" height="15" stroke="#1c49ab" stroke-width="1"/><path d="M5.5 0.5V15.5M10.5 0.5V15.5" stroke="#1c49ab" stroke-width="1"/><path d="M2.0 2.5H4.0M2.0 4.5H4.0" stroke="#1c49ab" stroke-width="1"/><path d="M2.2 6.5H3.8" stroke="#1c49ab" stroke-width="0.8" opacity="0.7"/><circle cx="3.0" cy="12.4" r="1.25" stroke="#1c49ab" stroke-width="0.9"/><path d="M7.0 2.5H9.0M7.0 4.5H9.0" stroke="#1c49ab" stroke-width="1"/><path d="M7.2 6.5H8.8" stroke="#1c49ab" stroke-width="0.8" opacity="0.7"/><circle cx="8.0" cy="12.4" r="1.25" stroke="#1c49ab" stroke-width="0.9"/><path d="M12.0 2.5H14.0M12.0 4.5H14.0" stroke="#1c49ab" stroke-width="1"/><path d="M12.2 6.5H13.8" stroke="#1c49ab" stroke-width="0.8" opacity="0.7"/><circle cx="13.0" cy="12.4" r="1.25" stroke="#1c49ab" stroke-width="0.9"/></svg>
<div class="t" style="top:315.21px;font-size:13px;line-height:16.25px;color:#be1a2c;left:205.00px;transform-origin:0 50%;transform:scaleX(0.975);">2025/08/00017</div>
<div class="t" style="top:315.33px;font-size:13px;line-height:16px;color:#141414;left:322.80px;transform-origin:0 50%;transform:scaleX(0.915);">DRA</div>
<div class="b" style="left:540.00px;top:312.90px;width:18.00px;height:20.00px;background:#f2f2f2;border-radius:4px;"></div>
<div class="t" style="top:314.52px;font-size:12.5px;line-height:15.62px;color:#333333;left:-51.00px;width:1200px;text-align:center;transform-origin:50% 50%;">1</div>
<div class="t" style="top:315.33px;font-size:13px;line-height:16px;color:#141414;left:643.30px;transform-origin:0 50%;transform:scaleX(0.915);">Numeria – Biuro Rachunkowe</div>
<div class="t" style="top:315.21px;font-size:13px;line-height:16.25px;color:#141414;left:843.30px;transform-origin:0 50%;transform:scaleX(0.915);">TechNova</div>
<div class="t" style="top:315.21px;font-size:13px;line-height:16.25px;color:#141414;left:1043.50px;transform-origin:0 50%;transform:scaleX(0.915);">Miesięczny</div>
<div class="t" style="top:315.21px;font-size:13px;line-height:16.25px;color:#141414;left:1143.30px;transform-origin:0 50%;transform:scaleX(0.915);">6762439850</div>
<div class="t" style="top:315.21px;font-size:13px;line-height:16.25px;color:#141414;left:1242.70px;transform-origin:0 50%;transform:scaleX(0.915);">2025</div>
<div class="t" style="top:315.21px;font-size:13px;line-height:16.25px;color:#141414;left:1303.00px;transform-origin:0 50%;transform:scaleX(0.915);">Sierpień</div>
<div class="t" style="top:315.21px;font-size:13px;line-height:16.25px;color:#141414;right:1987.00px;text-align:right;transform-origin:100% 50%;transform:scaleX(0.915);">2 500,00</div>
<div class="t" style="top:315.21px;font-size:13px;line-height:16.25px;color:#141414;left:1453.00px;transform-origin:0 50%;transform:scaleX(0.915);">2025-08-11 13:13</div>
<div class="t" style="top:315.21px;font-size:13px;line-height:16.25px;color:#141414;left:1563.00px;transform-origin:0 50%;transform:scaleX(0.915);">2025-08-11</div>
<div class="b" style="left:1663.00px;top:319.80px;width:68.00px;height:5.00px;background:#4db6ac;border-radius:3px;"></div>
<div class="t" style="top:315.21px;font-size:13px;line-height:16.25px;color:#141414;left:1738.40px;transform-origin:0 50%;transform:scaleX(0.99);">3/3</div>
<div class="t" style="top:315.21px;font-size:13px;line-height:16.25px;color:#141414;left:1843.00px;transform-origin:0 50%;transform:scaleX(0.915);">2025-08-01</div>
<div class="t" style="top:315.21px;font-size:13px;line-height:16.25px;color:#141414;left:1943.00px;transform-origin:0 50%;transform:scaleX(0.915);">2025-08-31</div>
<div class="t" style="top:315.21px;font-size:13px;line-height:16.25px;color:#141414;left:2042.80px;transform-origin:0 50%;transform:scaleX(0.915);">2025-09-20</div>
<div class="b" style="left:2143.00px;top:313.50px;width:499.00px;height:17.60px;background:#a5d6a7;border-radius:4px;"></div>
<div class="t" style="top:314.61px;font-size:13px;line-height:16.25px;color:#262626;left:1792.50px;width:1200px;text-align:center;transform-origin:50% 50%;transform:scaleX(0.915);">Zakończona</div>
<div class="t" style="top:315.13px;font-size:13px;line-height:16.4px;color:#141414;left:3153.70px;transform-origin:0 50%;transform:scaleX(0.915);">Bilans Team</div>
<div class="b" style="left:112.00px;top:375.00px;width:3258.00px;height:1.00px;background:#e3e3e3;"></div>
<div class="b" style="left:127.00px;top:350.60px;width:14.00px;height:14.00px;background:#ffffff;border:1.3px solid #a3a3a3;border-radius:2.5px;"></div>
<div class="b" style="left:169.00px;top:343.60px;width:28.00px;height:28.00px;background:#e3effb;border-radius:50%;"></div>
<svg class="b" style="left:175.00px;top:349.60px;" width="16" height="16" viewBox="0 0 16 16" fill="none"><rect x="0.5" y="0.5" width="15" height="15" stroke="#1c49ab" stroke-width="1"/><path d="M5.5 0.5V15.5M10.5 0.5V15.5" stroke="#1c49ab" stroke-width="1"/><path d="M2.0 2.5H4.0M2.0 4.5H4.0" stroke="#1c49ab" stroke-width="1"/><path d="M2.2 6.5H3.8" stroke="#1c49ab" stroke-width="0.8" opacity="0.7"/><circle cx="3.0" cy="12.4" r="1.25" stroke="#1c49ab" stroke-width="0.9"/><path d="M7.0 2.5H9.0M7.0 4.5H9.0" stroke="#1c49ab" stroke-width="1"/><path d="M7.2 6.5H8.8" stroke="#1c49ab" stroke-width="0.8" opacity="0.7"/><circle cx="8.0" cy="12.4" r="1.25" stroke="#1c49ab" stroke-width="0.9"/><path d="M12.0 2.5H14.0M12.0 4.5H14.0" stroke="#1c49ab" stroke-width="1"/><path d="M12.2 6.5H13.8" stroke="#1c49ab" stroke-width="0.8" opacity="0.7"/><circle cx="13.0" cy="12.4" r="1.25" stroke="#1c49ab" stroke-width="0.9"/></svg>
<div class="t" style="top:349.71px;font-size:13px;line-height:16.25px;color:#be1a2c;left:205.00px;transform-origin:0 50%;transform:scaleX(0.975);">2025/08/00018</div>
<div class="t" style="top:349.83px;font-size:13px;line-height:16px;color:#141414;left:322.80px;transform-origin:0 50%;transform:scaleX(0.915);">raport kadrowy</div>
<div class="b" style="left:540.00px;top:348.40px;width:18.00px;height:20.00px;background:#f2f2f2;border-radius:4px;"></div>
<div class="t" style="top:350.02px;font-size:12.5px;line-height:15.62px;color:#333333;left:-51.00px;width:1200px;text-align:center;transform-origin:50% 50%;">1</div>
<div class="t" style="top:349.83px;font-size:13px;line-height:16px;color:#141414;left:643.30px;transform-origin:0 50%;transform:scaleX(0.915);">Numeria – Biuro Rachunkowe</div>
<div class="t" style="top:349.71px;font-size:13px;line-height:16.25px;color:#141414;left:843.30px;transform-origin:0 50%;transform:scaleX(0.915);">TechNova</div>
<div class="t" style="top:349.71px;font-size:13px;line-height:16.25px;color:#141414;left:1043.50px;transform-origin:0 50%;transform:scaleX(0.915);">Miesięczny</div>
<div class="t" style="top:349.71px;font-size:13px;line-height:16.25px;color:#141414;left:1143.30px;transform-origin:0 50%;transform:scaleX(0.915);">6762439850</div>
<div class="t" style="top:349.71px;font-size:13px;line-height:16.25px;color:#141414;left:1242.70px;transform-origin:0 50%;transform:scaleX(0.915);">2025</div>
<div class="t" style="top:349.71px;font-size:13px;line-height:16.25px;color:#141414;left:1303.00px;transform-origin:0 50%;transform:scaleX(0.915);">Sierpień</div>
<div class="t" style="top:349.71px;font-size:13px;line-height:16.25px;color:#141414;right:1987.00px;text-align:right;transform-origin:100% 50%;transform:scaleX(0.915);">423,00</div>
<div class="t" style="top:349.71px;font-size:13px;line-height:16.25px;color:#141414;left:1453.00px;transform-origin:0 50%;transform:scaleX(0.915);">2025-08-11 13:13</div>
<div class="t" style="top:349.71px;font-size:13px;line-height:16.25px;color:#141414;left:1563.00px;transform-origin:0 50%;transform:scaleX(0.915);">2025-08-11</div>
<div class="b" style="left:1663.00px;top:355.30px;width:68.00px;height:5.00px;background:#4db6ac;border-radius:3px;"></div>
<div class="t" style="top:349.71px;font-size:13px;line-height:16.25px;color:#141414;left:1738.40px;transform-origin:0 50%;transform:scaleX(0.99);">3/3</div>
<div class="t" style="top:349.71px;font-size:13px;line-height:16.25px;color:#141414;left:1843.00px;transform-origin:0 50%;transform:scaleX(0.915);">2025-08-01</div>
<div class="t" style="top:349.71px;font-size:13px;line-height:16.25px;color:#141414;left:1943.00px;transform-origin:0 50%;transform:scaleX(0.915);">2025-08-31</div>
<div class="t" style="top:349.71px;font-size:13px;line-height:16.25px;color:#141414;left:2042.80px;transform-origin:0 50%;transform:scaleX(0.915);">2025-09-20</div>
<div class="b" style="left:2143.00px;top:349.00px;width:499.00px;height:17.60px;background:#a5d6a7;border-radius:4px;"></div>
<div class="t" style="top:350.11px;font-size:13px;line-height:16.25px;color:#262626;left:1792.50px;width:1200px;text-align:center;transform-origin:50% 50%;transform:scaleX(0.915);">Zakończona</div>
<div class="t" style="top:349.63px;font-size:13px;line-height:16.4px;color:#141414;left:3153.70px;transform-origin:0 50%;transform:scaleX(0.915);">Bilans Team</div>
<div class="b" style="left:112.00px;top:415.00px;width:3258.00px;height:1.00px;background:#e3e3e3;"></div>
<div class="b" style="left:127.00px;top:388.10px;width:14.00px;height:14.00px;background:#ffffff;border:1.3px solid #a3a3a3;border-radius:2.5px;"></div>
<div class="b" style="left:169.00px;top:381.10px;width:28.00px;height:28.00px;background:#e3effb;border-radius:50%;"></div>
<svg class="b" style="left:175.00px;top:387.10px;" width="16" height="16" viewBox="0 0 16 16" fill="none"><rect x="0.5" y="0.5" width="15" height="15" stroke="#1c49ab" stroke-width="1"/><path d="M5.5 0.5V15.5M10.5 0.5V15.5" stroke="#1c49ab" stroke-width="1"/><path d="M2.0 2.5H4.0M2.0 4.5H4.0" stroke="#1c49ab" stroke-width="1"/><path d="M2.2 6.5H3.8" stroke="#1c49ab" stroke-width="0.8" opacity="0.7"/><circle cx="3.0" cy="12.4" r="1.25" stroke="#1c49ab" stroke-width="0.9"/><path d="M7.0 2.5H9.0M7.0 4.5H9.0" stroke="#1c49ab" stroke-width="1"/><path d="M7.2 6.5H8.8" stroke="#1c49ab" stroke-width="0.8" opacity="0.7"/><circle cx="8.0" cy="12.4" r="1.25" stroke="#1c49ab" stroke-width="0.9"/><path d="M12.0 2.5H14.0M12.0 4.5H14.0" stroke="#1c49ab" stroke-width="1"/><path d="M12.2 6.5H13.8" stroke="#1c49ab" stroke-width="0.8" opacity="0.7"/><circle cx="13.0" cy="12.4" r="1.25" stroke="#1c49ab" stroke-width="0.9"/></svg>
<div class="t" style="top:387.21px;font-size:13px;line-height:16.25px;color:#be1a2c;left:205.00px;transform-origin:0 50%;transform:scaleX(0.975);">2025/08/00019</div>
<div class="t" style="top:378.53px;font-size:13px;line-height:16px;color:#141414;left:322.80px;transform-origin:0 50%;transform:scaleX(0.915);">ewidencjonowanie danych<br>księgowych</div>
<div class="b" style="left:540.00px;top:385.90px;width:18.00px;height:20.00px;background:#f2f2f2;border-radius:4px;"></div>
<div class="t" style="top:387.52px;font-size:12.5px;line-height:15.62px;color:#333333;left:-51.00px;width:1200px;text-align:center;transform-origin:50% 50%;">1</div>
<div class="t" style="top:387.33px;font-size:13px;line-height:16px;color:#141414;left:643.30px;transform-origin:0 50%;transform:scaleX(0.915);">Numeria – Biuro Rachunkowe</div>
<div class="t" style="top:387.21px;font-size:13px;line-height:16.25px;color:#141414;left:843.30px;transform-origin:0 50%;transform:scaleX(0.915);">TechNova</div>
<div class="t" style="top:387.21px;font-size:13px;line-height:16.25px;color:#141414;left:1043.50px;transform-origin:0 50%;transform:scaleX(0.915);">Miesięczny</div>
<div class="t" style="top:387.21px;font-size:13px;line-height:16.25px;color:#141414;left:1143.30px;transform-origin:0 50%;transform:scaleX(0.915);">6762439850</div>
<div class="t" style="top:387.21px;font-size:13px;line-height:16.25px;color:#141414;left:1242.70px;transform-origin:0 50%;transform:scaleX(0.915);">2025</div>
<div class="t" style="top:387.21px;font-size:13px;line-height:16.25px;color:#141414;left:1303.00px;transform-origin:0 50%;transform:scaleX(0.915);">Sierpień</div>
<div class="t" style="top:387.21px;font-size:13px;line-height:16.25px;color:#141414;right:1987.00px;text-align:right;transform-origin:100% 50%;transform:scaleX(0.915);">0,00</div>
<div class="t" style="top:387.21px;font-size:13px;line-height:16.25px;color:#141414;left:1453.00px;transform-origin:0 50%;transform:scaleX(0.915);">2025-08-11 13:13</div>
<div class="t" style="top:387.21px;font-size:13px;line-height:16.25px;color:#141414;left:1563.00px;transform-origin:0 50%;transform:scaleX(0.915);">2025-09-20</div>
<div class="b" style="left:1663.00px;top:392.80px;width:68.00px;height:5.00px;background:#4db6ac;border-radius:3px;"></div>
<div class="t" style="top:387.21px;font-size:13px;line-height:16.25px;color:#141414;left:1738.40px;transform-origin:0 50%;transform:scaleX(0.99);">3/3</div>
<div class="t" style="top:387.21px;font-size:13px;line-height:16.25px;color:#141414;left:1843.00px;transform-origin:0 50%;transform:scaleX(0.915);">2025-08-01</div>
<div class="t" style="top:387.21px;font-size:13px;line-height:16.25px;color:#141414;left:1943.00px;transform-origin:0 50%;transform:scaleX(0.915);">2025-08-31</div>
<div class="t" style="top:387.21px;font-size:13px;line-height:16.25px;color:#141414;left:2042.80px;transform-origin:0 50%;transform:scaleX(0.915);">2025-09-20</div>
<div class="b" style="left:2143.00px;top:386.50px;width:499.00px;height:17.60px;background:#a5d6a7;border-radius:4px;"></div>
<div class="t" style="top:387.61px;font-size:13px;line-height:16.25px;color:#262626;left:1792.50px;width:1200px;text-align:center;transform-origin:50% 50%;transform:scaleX(0.915);">Zakończona</div>
<div class="t" style="top:387.13px;font-size:13px;line-height:16.4px;color:#141414;left:3153.70px;transform-origin:0 50%;transform:scaleX(0.915);">Bilans Team</div>
<div class="b" style="left:112.00px;top:454.00px;width:3258.00px;height:1.00px;background:#e3e3e3;"></div>
<div class="b" style="left:127.00px;top:427.60px;width:14.00px;height:14.00px;background:#ffffff;border:1.3px solid #a3a3a3;border-radius:2.5px;"></div>
<div class="b" style="left:169.00px;top:420.60px;width:28.00px;height:28.00px;background:#e3effb;border-radius:50%;"></div>
<svg class="b" style="left:175.00px;top:426.60px;" width="16" height="16" viewBox="0 0 16 16" fill="none"><rect x="0.5" y="0.5" width="15" height="15" stroke="#1c49ab" stroke-width="1"/><path d="M5.5 0.5V15.5M10.5 0.5V15.5" stroke="#1c49ab" stroke-width="1"/><path d="M2.0 2.5H4.0M2.0 4.5H4.0" stroke="#1c49ab" stroke-width="1"/><path d="M2.2 6.5H3.8" stroke="#1c49ab" stroke-width="0.8" opacity="0.7"/><circle cx="3.0" cy="12.4" r="1.25" stroke="#1c49ab" stroke-width="0.9"/><path d="M7.0 2.5H9.0M7.0 4.5H9.0" stroke="#1c49ab" stroke-width="1"/><path d="M7.2 6.5H8.8" stroke="#1c49ab" stroke-width="0.8" opacity="0.7"/><circle cx="8.0" cy="12.4" r="1.25" stroke="#1c49ab" stroke-width="0.9"/><path d="M12.0 2.5H14.0M12.0 4.5H14.0" stroke="#1c49ab" stroke-width="1"/><path d="M12.2 6.5H13.8" stroke="#1c49ab" stroke-width="0.8" opacity="0.7"/><circle cx="13.0" cy="12.4" r="1.25" stroke="#1c49ab" stroke-width="0.9"/></svg>
<div class="t" style="top:426.71px;font-size:13px;line-height:16.25px;color:#be1a2c;left:205.00px;transform-origin:0 50%;transform:scaleX(0.975);">2025/08/00020</div>
<div class="t" style="top:418.03px;font-size:13px;line-height:16px;color:#141414;left:322.80px;transform-origin:0 50%;transform:scaleX(0.915);">ewidencjonowanie danych<br>kadrowych</div>
<div class="b" style="left:540.00px;top:425.40px;width:18.00px;height:20.00px;background:#f2f2f2;border-radius:4px;"></div>
<div class="t" style="top:427.02px;font-size:12.5px;line-height:15.62px;color:#333333;left:-51.00px;width:1200px;text-align:center;transform-origin:50% 50%;">1</div>
<div class="t" style="top:426.83px;font-size:13px;line-height:16px;color:#141414;left:643.30px;transform-origin:0 50%;transform:scaleX(0.915);">Numeria – Biuro Rachunkowe</div>
<div class="t" style="top:426.71px;font-size:13px;line-height:16.25px;color:#141414;left:843.30px;transform-origin:0 50%;transform:scaleX(0.915);">TechNova</div>
<div class="t" style="top:426.71px;font-size:13px;line-height:16.25px;color:#141414;left:1043.50px;transform-origin:0 50%;transform:scaleX(0.915);">Miesięczny</div>
<div class="t" style="top:426.71px;font-size:13px;line-height:16.25px;color:#141414;left:1143.30px;transform-origin:0 50%;transform:scaleX(0.915);">6762439850</div>
<div class="t" style="top:426.71px;font-size:13px;line-height:16.25px;color:#141414;left:1242.70px;transform-origin:0 50%;transform:scaleX(0.915);">2025</div>
<div class="t" style="top:426.71px;font-size:13px;line-height:16.25px;color:#141414;left:1303.00px;transform-origin:0 50%;transform:scaleX(0.915);">Sierpień</div>
<div class="t" style="top:426.71px;font-size:13px;line-height:16.25px;color:#141414;right:1987.00px;text-align:right;transform-origin:100% 50%;transform:scaleX(0.915);">0,00</div>
<div class="t" style="top:426.71px;font-size:13px;line-height:16.25px;color:#141414;left:1453.00px;transform-origin:0 50%;transform:scaleX(0.915);">2025-08-11 13:13</div>
<div class="t" style="top:426.71px;font-size:13px;line-height:16.25px;color:#141414;left:1563.00px;transform-origin:0 50%;transform:scaleX(0.915);">2025-09-20</div>
<div class="b" style="left:1663.00px;top:432.30px;width:68.00px;height:5.00px;background:#ececec;border-radius:3px;"></div>
<div class="t" style="top:426.71px;font-size:13px;line-height:16.25px;color:#141414;left:1738.40px;transform-origin:0 50%;transform:scaleX(0.99);">0/3</div>
<div class="t" style="top:426.71px;font-size:13px;line-height:16.25px;color:#141414;left:1843.00px;transform-origin:0 50%;transform:scaleX(0.915);">2025-08-01</div>
<div class="t" style="top:426.71px;font-size:13px;line-height:16.25px;color:#141414;left:1943.00px;transform-origin:0 50%;transform:scaleX(0.915);">2025-08-31</div>
<div class="t" style="top:426.71px;font-size:13px;line-height:16.25px;color:#141414;left:2042.80px;transform-origin:0 50%;transform:scaleX(0.915);">2025-09-20</div>
<div class="b" style="left:2143.00px;top:426.00px;width:499.00px;height:17.60px;background:#a5d6a7;border-radius:4px;"></div>
<div class="t" style="top:427.11px;font-size:13px;line-height:16.25px;color:#262626;left:1792.50px;width:1200px;text-align:center;transform-origin:50% 50%;transform:scaleX(0.915);">Zakończona</div>
<div class="t" style="top:426.63px;font-size:13px;line-height:16.4px;color:#141414;left:3153.70px;transform-origin:0 50%;transform:scaleX(0.915);">Bilans Team</div>
<div class="b" style="left:112.00px;top:510.00px;width:3258.00px;height:1.00px;background:#e3e3e3;"></div>
<div class="b" style="left:127.00px;top:475.10px;width:14.00px;height:14.00px;background:#ffffff;border:1.3px solid #a3a3a3;border-radius:2.5px;"></div>
<div class="b" style="left:169.00px;top:468.10px;width:28.00px;height:28.00px;background:#e3effb;border-radius:50%;"></div>
<svg class="b" style="left:175.00px;top:474.10px;" width="16" height="16" viewBox="0 0 16 16" fill="none"><rect x="0.5" y="0.5" width="15" height="15" stroke="#1c49ab" stroke-width="1"/><path d="M5.5 0.5V15.5M10.5 0.5V15.5" stroke="#1c49ab" stroke-width="1"/><path d="M2.0 2.5H4.0M2.0 4.5H4.0" stroke="#1c49ab" stroke-width="1"/><path d="M2.2 6.5H3.8" stroke="#1c49ab" stroke-width="0.8" opacity="0.7"/><circle cx="3.0" cy="12.4" r="1.25" stroke="#1c49ab" stroke-width="0.9"/><path d="M7.0 2.5H9.0M7.0 4.5H9.0" stroke="#1c49ab" stroke-width="1"/><path d="M7.2 6.5H8.8" stroke="#1c49ab" stroke-width="0.8" opacity="0.7"/><circle cx="8.0" cy="12.4" r="1.25" stroke="#1c49ab" stroke-width="0.9"/><path d="M12.0 2.5H14.0M12.0 4.5H14.0" stroke="#1c49ab" stroke-width="1"/><path d="M12.2 6.5H13.8" stroke="#1c49ab" stroke-width="0.8" opacity="0.7"/><circle cx="13.0" cy="12.4" r="1.25" stroke="#1c49ab" stroke-width="0.9"/></svg>
<div class="t" style="top:475.21px;font-size:13px;line-height:16.25px;color:#be1a2c;left:205.00px;transform-origin:0 50%;transform:scaleX(0.975);">2025/08/00021</div>
<div class="t" style="top:475.33px;font-size:13px;line-height:16px;color:#141414;left:322.80px;transform-origin:0 50%;transform:scaleX(0.915);">raport miesięczny</div>
<div class="b" style="left:540.00px;top:472.90px;width:18.00px;height:20.00px;background:#f2f2f2;border-radius:4px;"></div>
<div class="t" style="top:474.52px;font-size:12.5px;line-height:15.62px;color:#333333;left:-51.00px;width:1200px;text-align:center;transform-origin:50% 50%;">1</div>
<div class="t" style="top:475.33px;font-size:13px;line-height:16px;color:#141414;left:643.30px;transform-origin:0 50%;transform:scaleX(0.915);">Numeria – Biuro Rachunkowe</div>
<div class="t" style="top:475.21px;font-size:13px;line-height:16.25px;color:#141414;left:843.30px;transform-origin:0 50%;transform:scaleX(0.915);">Zielony Liść</div>
<div class="t" style="top:475.21px;font-size:13px;line-height:16.25px;color:#141414;left:1043.50px;transform-origin:0 50%;transform:scaleX(0.915);">Miesięczny</div>
<div class="t" style="top:475.21px;font-size:13px;line-height:16.25px;color:#141414;left:1143.30px;transform-origin:0 50%;transform:scaleX(0.915);">5252671944</div>
<div class="t" style="top:475.21px;font-size:13px;line-height:16.25px;color:#141414;left:1242.70px;transform-origin:0 50%;transform:scaleX(0.915);">2025</div>
<div class="t" style="top:475.21px;font-size:13px;line-height:16.25px;color:#141414;left:1303.00px;transform-origin:0 50%;transform:scaleX(0.915);">Sierpień</div>
<div class="t" style="top:475.21px;font-size:13px;line-height:16.25px;color:#141414;right:1987.00px;text-align:right;transform-origin:100% 50%;transform:scaleX(0.915);">0,00</div>
<div class="t" style="top:475.21px;font-size:13px;line-height:16.25px;color:#141414;left:1453.00px;transform-origin:0 50%;transform:scaleX(0.915);">2025-08-11 13:13</div>
<div class="t" style="top:475.21px;font-size:13px;line-height:16.25px;color:#141414;left:1563.00px;transform-origin:0 50%;transform:scaleX(0.915);">2025-09-20</div>
<div class="b" style="left:1663.00px;top:479.80px;width:68.00px;height:5.00px;background:#ececec;border-radius:3px;"></div>
<div class="t" style="top:475.21px;font-size:13px;line-height:16.25px;color:#141414;left:1738.40px;transform-origin:0 50%;transform:scaleX(0.99);">0/3</div>
<div class="t" style="top:475.21px;font-size:13px;line-height:16.25px;color:#141414;left:1843.00px;transform-origin:0 50%;transform:scaleX(0.915);">2025-08-01</div>
<div class="t" style="top:475.21px;font-size:13px;line-height:16.25px;color:#141414;left:1943.00px;transform-origin:0 50%;transform:scaleX(0.915);">2025-08-31</div>
<div class="t" style="top:475.21px;font-size:13px;line-height:16.25px;color:#141414;left:2042.80px;transform-origin:0 50%;transform:scaleX(0.915);">2025-09-20</div>
<div class="b" style="left:2143.00px;top:473.50px;width:499.00px;height:17.60px;background:#90caf9;border-radius:4px;"></div>
<div class="t" style="top:474.61px;font-size:13px;line-height:16.25px;color:#262626;left:1792.50px;width:1200px;text-align:center;transform-origin:50% 50%;transform:scaleX(0.915);">Nowa</div>
<div class="t" style="top:457.53px;font-size:13px;line-height:16.4px;color:#141414;left:3153.70px;transform-origin:0 50%;transform:scaleX(0.915);">Zespół Kontroli<br>Księgowej<br>„Sigma”</div>
<div class="b" style="left:112.00px;top:566.00px;width:3258.00px;height:1.00px;background:#e3e3e3;"></div>
<div class="b" style="left:127.00px;top:531.10px;width:14.00px;height:14.00px;background:#ffffff;border:1.3px solid #a3a3a3;border-radius:2.5px;"></div>
<div class="b" style="left:169.00px;top:524.10px;width:28.00px;height:28.00px;background:#e3effb;border-radius:50%;"></div>
<svg class="b" style="left:175.00px;top:530.10px;" width="16" height="16" viewBox="0 0 16 16" fill="none"><rect x="0.5" y="0.5" width="15" height="15" stroke="#1c49ab" stroke-width="1"/><path d="M5.5 0.5V15.5M10.5 0.5V15.5" stroke="#1c49ab" stroke-width="1"/><path d="M2.0 2.5H4.0M2.0 4.5H4.0" stroke="#1c49ab" stroke-width="1"/><path d="M2.2 6.5H3.8" stroke="#1c49ab" stroke-width="0.8" opacity="0.7"/><circle cx="3.0" cy="12.4" r="1.25" stroke="#1c49ab" stroke-width="0.9"/><path d="M7.0 2.5H9.0M7.0 4.5H9.0" stroke="#1c49ab" stroke-width="1"/><path d="M7.2 6.5H8.8" stroke="#1c49ab" stroke-width="0.8" opacity="0.7"/><circle cx="8.0" cy="12.4" r="1.25" stroke="#1c49ab" stroke-width="0.9"/><path d="M12.0 2.5H14.0M12.0 4.5H14.0" stroke="#1c49ab" stroke-width="1"/><path d="M12.2 6.5H13.8" stroke="#1c49ab" stroke-width="0.8" opacity="0.7"/><circle cx="13.0" cy="12.4" r="1.25" stroke="#1c49ab" stroke-width="0.9"/></svg>
<div class="t" style="top:530.21px;font-size:13px;line-height:16.25px;color:#be1a2c;left:205.00px;transform-origin:0 50%;transform:scaleX(0.975);">2025/08/00022</div>
<div class="t" style="top:530.33px;font-size:13px;line-height:16px;color:#141414;left:322.80px;transform-origin:0 50%;transform:scaleX(0.915);">DRA</div>
<div class="b" style="left:540.00px;top:528.90px;width:18.00px;height:20.00px;background:#f2f2f2;border-radius:4px;"></div>
<div class="t" style="top:530.52px;font-size:12.5px;line-height:15.62px;color:#333333;left:-51.00px;width:1200px;text-align:center;transform-origin:50% 50%;">1</div>
<div class="t" style="top:530.33px;font-size:13px;line-height:16px;color:#141414;left:643.30px;transform-origin:0 50%;transform:scaleX(0.915);">Numeria – Biuro Rachunkowe</div>
<div class="t" style="top:530.21px;font-size:13px;line-height:16.25px;color:#141414;left:843.30px;transform-origin:0 50%;transform:scaleX(0.915);">Zielony Liść</div>
<div class="t" style="top:530.21px;font-size:13px;line-height:16.25px;color:#141414;left:1043.50px;transform-origin:0 50%;transform:scaleX(0.915);">Miesięczny</div>
<div class="t" style="top:530.21px;font-size:13px;line-height:16.25px;color:#141414;left:1143.30px;transform-origin:0 50%;transform:scaleX(0.915);">5252671944</div>
<div class="t" style="top:530.21px;font-size:13px;line-height:16.25px;color:#141414;left:1242.70px;transform-origin:0 50%;transform:scaleX(0.915);">2025</div>
<div class="t" style="top:530.21px;font-size:13px;line-height:16.25px;color:#141414;left:1303.00px;transform-origin:0 50%;transform:scaleX(0.915);">Sierpień</div>
<div class="t" style="top:530.21px;font-size:13px;line-height:16.25px;color:#141414;right:1987.00px;text-align:right;transform-origin:100% 50%;transform:scaleX(0.915);">0,00</div>
<div class="t" style="top:530.21px;font-size:13px;line-height:16.25px;color:#141414;left:1453.00px;transform-origin:0 50%;transform:scaleX(0.915);">2025-08-11 13:13</div>
<div class="t" style="top:530.21px;font-size:13px;line-height:16.25px;color:#141414;left:1563.00px;transform-origin:0 50%;transform:scaleX(0.915);">2025-09-20</div>
<div class="b" style="left:1663.00px;top:535.80px;width:68.00px;height:5.00px;background:#ececec;border-radius:3px;"></div>
<div class="t" style="top:530.21px;font-size:13px;line-height:16.25px;color:#141414;left:1738.40px;transform-origin:0 50%;transform:scaleX(0.99);">0/3</div>
<div class="t" style="top:530.21px;font-size:13px;line-height:16.25px;color:#141414;left:1843.00px;transform-origin:0 50%;transform:scaleX(0.915);">2025-08-01</div>
<div class="t" style="top:530.21px;font-size:13px;line-height:16.25px;color:#141414;left:1943.00px;transform-origin:0 50%;transform:scaleX(0.915);">2025-08-31</div>
<div class="t" style="top:530.21px;font-size:13px;line-height:16.25px;color:#141414;left:2042.80px;transform-origin:0 50%;transform:scaleX(0.915);">2025-09-20</div>
<div class="b" style="left:2143.00px;top:529.50px;width:499.00px;height:17.60px;background:#90caf9;border-radius:4px;"></div>
<div class="t" style="top:530.61px;font-size:13px;line-height:16.25px;color:#262626;left:1792.50px;width:1200px;text-align:center;transform-origin:50% 50%;transform:scaleX(0.915);">Nowa</div>
<div class="t" style="top:513.53px;font-size:13px;line-height:16.4px;color:#141414;left:3153.70px;transform-origin:0 50%;transform:scaleX(0.915);">Zespół Kontroli<br>Księgowej<br>„Sigma”</div>
<div class="b" style="left:112.00px;top:622.00px;width:3258.00px;height:1.00px;background:#e3e3e3;"></div>
<div class="b" style="left:127.00px;top:587.10px;width:14.00px;height:14.00px;background:#ffffff;border:1.3px solid #a3a3a3;border-radius:2.5px;"></div>
<div class="b" style="left:169.00px;top:580.10px;width:28.00px;height:28.00px;background:#e3effb;border-radius:50%;"></div>
<svg class="b" style="left:175.00px;top:586.10px;" width="16" height="16" viewBox="0 0 16 16" fill="none"><rect x="0.5" y="0.5" width="15" height="15" stroke="#1c49ab" stroke-width="1"/><path d="M5.5 0.5V15.5M10.5 0.5V15.5" stroke="#1c49ab" stroke-width="1"/><path d="M2.0 2.5H4.0M2.0 4.5H4.0" stroke="#1c49ab" stroke-width="1"/><path d="M2.2 6.5H3.8" stroke="#1c49ab" stroke-width="0.8" opacity="0.7"/><circle cx="3.0" cy="12.4" r="1.25" stroke="#1c49ab" stroke-width="0.9"/><path d="M7.0 2.5H9.0M7.0 4.5H9.0" stroke="#1c49ab" stroke-width="1"/><path d="M7.2 6.5H8.8" stroke="#1c49ab" stroke-width="0.8" opacity="0.7"/><circle cx="8.0" cy="12.4" r="1.25" stroke="#1c49ab" stroke-width="0.9"/><path d="M12.0 2.5H14.0M12.0 4.5H14.0" stroke="#1c49ab" stroke-width="1"/><path d="M12.2 6.5H13.8" stroke="#1c49ab" stroke-width="0.8" opacity="0.7"/><circle cx="13.0" cy="12.4" r="1.25" stroke="#1c49ab" stroke-width="0.9"/></svg>
<div class="t" style="top:586.21px;font-size:13px;line-height:16.25px;color:#be1a2c;left:205.00px;transform-origin:0 50%;transform:scaleX(0.975);">2025/08/00023</div>
<div class="t" style="top:586.33px;font-size:13px;line-height:16px;color:#141414;left:322.80px;transform-origin:0 50%;transform:scaleX(0.915);">raport kadrowy</div>
<div class="b" style="left:540.00px;top:584.90px;width:18.00px;height:20.00px;background:#f2f2f2;border-radius:4px;"></div>
<div class="t" style="top:586.52px;font-size:12.5px;line-height:15.62px;color:#333333;left:-51.00px;width:1200px;text-align:center;transform-origin:50% 50%;">1</div>
<div class="t" style="top:586.33px;font-size:13px;line-height:16px;color:#141414;left:643.30px;transform-origin:0 50%;transform:scaleX(0.915);">Numeria – Biuro Rachunkowe</div>
<div class="t" style="top:586.21px;font-size:13px;line-height:16.25px;color:#141414;left:843.30px;transform-origin:0 50%;transform:scaleX(0.915);">Zielony Liść</div>
<div class="t" style="top:586.21px;font-size:13px;line-height:16.25px;color:#141414;left:1043.50px;transform-origin:0 50%;transform:scaleX(0.915);">Miesięczny</div>
<div class="t" style="top:586.21px;font-size:13px;line-height:16.25px;color:#141414;left:1143.30px;transform-origin:0 50%;transform:scaleX(0.915);">5252671944</div>
<div class="t" style="top:586.21px;font-size:13px;line-height:16.25px;color:#141414;left:1242.70px;transform-origin:0 50%;transform:scaleX(0.915);">2025</div>
<div class="t" style="top:586.21px;font-size:13px;line-height:16.25px;color:#141414;left:1303.00px;transform-origin:0 50%;transform:scaleX(0.915);">Sierpień</div>
<div class="t" style="top:586.21px;font-size:13px;line-height:16.25px;color:#141414;right:1987.00px;text-align:right;transform-origin:100% 50%;transform:scaleX(0.915);">0,00</div>
<div class="t" style="top:586.21px;font-size:13px;line-height:16.25px;color:#141414;left:1453.00px;transform-origin:0 50%;transform:scaleX(0.915);">2025-08-11 13:13</div>
<div class="t" style="top:586.21px;font-size:13px;line-height:16.25px;color:#141414;left:1563.00px;transform-origin:0 50%;transform:scaleX(0.915);">2025-09-20</div>
<div class="b" style="left:1663.00px;top:591.80px;width:68.00px;height:5.00px;background:#ececec;border-radius:3px;"></div>
<div class="t" style="top:586.21px;font-size:13px;line-height:16.25px;color:#141414;left:1738.40px;transform-origin:0 50%;transform:scaleX(0.99);">0/3</div>
<div class="t" style="top:586.21px;font-size:13px;line-height:16.25px;color:#141414;left:1843.00px;transform-origin:0 50%;transform:scaleX(0.915);">2025-08-01</div>
<div class="t" style="top:586.21px;font-size:13px;line-height:16.25px;color:#141414;left:1943.00px;transform-origin:0 50%;transform:scaleX(0.915);">2025-08-31</div>
<div class="t" style="top:586.21px;font-size:13px;line-height:16.25px;color:#141414;left:2042.80px;transform-origin:0 50%;transform:scaleX(0.915);">2025-09-20</div>
<div class="b" style="left:2143.00px;top:585.50px;width:499.00px;height:17.60px;background:#ef9a9a;border-radius:4px;"></div>
<div class="t" style="top:586.61px;font-size:13px;line-height:16.25px;color:#262626;left:1792.50px;width:1200px;text-align:center;transform-origin:50% 50%;transform:scaleX(0.915);">Anulowana</div>
<div class="t" style="top:569.53px;font-size:13px;line-height:16.4px;color:#141414;left:3153.70px;transform-origin:0 50%;transform:scaleX(0.915);">Zespół Kontroli<br>Księgowej<br>„Sigma”</div>
<div class="b" style="left:112.00px;top:678.00px;width:3258.00px;height:1.00px;background:#e3e3e3;"></div>
<div class="b" style="left:127.00px;top:643.10px;width:14.00px;height:14.00px;background:#ffffff;border:1.3px solid #a3a3a3;border-radius:2.5px;"></div>
<div class="b" style="left:169.00px;top:636.10px;width:28.00px;height:28.00px;background:#e3effb;border-radius:50%;"></div>
<svg class="b" style="left:175.00px;top:642.10px;" width="16" height="16" viewBox="0 0 16 16" fill="none"><rect x="0.5" y="0.5" width="15" height="15" stroke="#1c49ab" stroke-width="1"/><path d="M5.5 0.5V15.5M10.5 0.5V15.5" stroke="#1c49ab" stroke-width="1"/><path d="M2.0 2.5H4.0M2.0 4.5H4.0" stroke="#1c49ab" stroke-width="1"/><path d="M2.2 6.5H3.8" stroke="#1c49ab" stroke-width="0.8" opacity="0.7"/><circle cx="3.0" cy="12.4" r="1.25" stroke="#1c49ab" stroke-width="0.9"/><path d="M7.0 2.5H9.0M7.0 4.5H9.0" stroke="#1c49ab" stroke-width="1"/><path d="M7.2 6.5H8.8" stroke="#1c49ab" stroke-width="0.8" opacity="0.7"/><circle cx="8.0" cy="12.4" r="1.25" stroke="#1c49ab" stroke-width="0.9"/><path d="M12.0 2.5H14.0M12.0 4.5H14.0" stroke="#1c49ab" stroke-width="1"/><path d="M12.2 6.5H13.8" stroke="#1c49ab" stroke-width="0.8" opacity="0.7"/><circle cx="13.0" cy="12.4" r="1.25" stroke="#1c49ab" stroke-width="0.9"/></svg>
<div class="t" style="top:642.21px;font-size:13px;line-height:16.25px;color:#be1a2c;left:205.00px;transform-origin:0 50%;transform:scaleX(0.975);">2025/08/00024</div>
<div class="t" style="top:633.53px;font-size:13px;line-height:16px;color:#141414;left:322.80px;transform-origin:0 50%;transform:scaleX(0.915);">ewidencjonowanie danych<br>księgowych</div>
<div class="b" style="left:540.00px;top:640.90px;width:18.00px;height:20.00px;background:#f2f2f2;border-radius:4px;"></div>
<div class="t" style="top:642.52px;font-size:12.5px;line-height:15.62px;color:#333333;left:-51.00px;width:1200px;text-align:center;transform-origin:50% 50%;">1</div>
<div class="t" style="top:642.33px;font-size:13px;line-height:16px;color:#141414;left:643.30px;transform-origin:0 50%;transform:scaleX(0.915);">Numeria – Biuro Rachunkowe</div>
<div class="t" style="top:642.21px;font-size:13px;line-height:16.25px;color:#141414;left:843.30px;transform-origin:0 50%;transform:scaleX(0.915);">Zielony Liść</div>
<div class="t" style="top:642.21px;font-size:13px;line-height:16.25px;color:#141414;left:1043.50px;transform-origin:0 50%;transform:scaleX(0.915);">Miesięczny</div>
<div class="t" style="top:642.21px;font-size:13px;line-height:16.25px;color:#141414;left:1143.30px;transform-origin:0 50%;transform:scaleX(0.915);">5252671944</div>
<div class="t" style="top:642.21px;font-size:13px;line-height:16.25px;color:#141414;left:1242.70px;transform-origin:0 50%;transform:scaleX(0.915);">2025</div>
<div class="t" style="top:642.21px;font-size:13px;line-height:16.25px;color:#141414;left:1303.00px;transform-origin:0 50%;transform:scaleX(0.915);">Sierpień</div>
<div class="t" style="top:642.21px;font-size:13px;line-height:16.25px;color:#141414;right:1987.00px;text-align:right;transform-origin:100% 50%;transform:scaleX(0.915);">0,00</div>
<div class="t" style="top:642.21px;font-size:13px;line-height:16.25px;color:#141414;left:1453.00px;transform-origin:0 50%;transform:scaleX(0.915);">2025-08-11 13:13</div>
<div class="t" style="top:642.21px;font-size:13px;line-height:16.25px;color:#141414;left:1563.00px;transform-origin:0 50%;transform:scaleX(0.915);">2025-09-20</div>
<div class="b" style="left:1663.00px;top:647.80px;width:68.00px;height:5.00px;background:#4db6ac;border-radius:3px;"></div>
<div class="t" style="top:642.21px;font-size:13px;line-height:16.25px;color:#141414;left:1738.40px;transform-origin:0 50%;transform:scaleX(0.99);">3/3</div>
<div class="t" style="top:642.21px;font-size:13px;line-height:16.25px;color:#141414;left:1843.00px;transform-origin:0 50%;transform:scaleX(0.915);">2025-08-01</div>
<div class="t" style="top:642.21px;font-size:13px;line-height:16.25px;color:#141414;left:1943.00px;transform-origin:0 50%;transform:scaleX(0.915);">2025-08-31</div>
<div class="t" style="top:642.21px;font-size:13px;line-height:16.25px;color:#141414;left:2042.80px;transform-origin:0 50%;transform:scaleX(0.915);">2025-09-20</div>
<div class="b" style="left:2143.00px;top:641.50px;width:499.00px;height:17.60px;background:#a5d6a7;border-radius:4px;"></div>
<div class="t" style="top:642.61px;font-size:13px;line-height:16.25px;color:#262626;left:1792.50px;width:1200px;text-align:center;transform-origin:50% 50%;transform:scaleX(0.915);">Zakończona</div>
<div class="t" style="top:625.53px;font-size:13px;line-height:16.4px;color:#141414;left:3153.70px;transform-origin:0 50%;transform:scaleX(0.915);">Zespół Kontroli<br>Księgowej<br>„Sigma”</div>
<div class="b" style="left:112.00px;top:733.00px;width:3258.00px;height:1.00px;background:#e3e3e3;"></div>
<div class="b" style="left:127.00px;top:698.60px;width:14.00px;height:14.00px;background:#ffffff;border:1.3px solid #a3a3a3;border-radius:2.5px;"></div>
<div class="b" style="left:169.00px;top:691.60px;width:28.00px;height:28.00px;background:#e3effb;border-radius:50%;"></div>
<svg class="b" style="left:175.00px;top:697.60px;" width="16" height="16" viewBox="0 0 16 16" fill="none"><rect x="0.5" y="0.5" width="15" height="15" stroke="#1c49ab" stroke-width="1"/><path d="M5.5 0.5V15.5M10.5 0.5V15.5" stroke="#1c49ab" stroke-width="1"/><path d="M2.0 2.5H4.0M2.0 4.5H4.0" stroke="#1c49ab" stroke-width="1"/><path d="M2.2 6.5H3.8" stroke="#1c49ab" stroke-width="0.8" opacity="0.7"/><circle cx="3.0" cy="12.4" r="1.25" stroke="#1c49ab" stroke-width="0.9"/><path d="M7.0 2.5H9.0M7.0 4.5H9.0" stroke="#1c49ab" stroke-width="1"/><path d="M7.2 6.5H8.8" stroke="#1c49ab" stroke-width="0.8" opacity="0.7"/><circle cx="8.0" cy="12.4" r="1.25" stroke="#1c49ab" stroke-width="0.9"/><path d="M12.0 2.5H14.0M12.0 4.5H14.0" stroke="#1c49ab" stroke-width="1"/><path d="M12.2 6.5H13.8" stroke="#1c49ab" stroke-width="0.8" opacity="0.7"/><circle cx="13.0" cy="12.4" r="1.25" stroke="#1c49ab" stroke-width="0.9"/></svg>
<div class="t" style="top:697.71px;font-size:13px;line-height:16.25px;color:#be1a2c;left:205.00px;transform-origin:0 50%;transform:scaleX(0.975);">2025/08/00025</div>
<div class="t" style="top:689.03px;font-size:13px;line-height:16px;color:#141414;left:322.80px;transform-origin:0 50%;transform:scaleX(0.915);">ewidencjonowanie danych<br>kadrowych</div>
<div class="b" style="left:540.00px;top:696.40px;width:18.00px;height:20.00px;background:#f2f2f2;border-radius:4px;"></div>
<div class="t" style="top:698.02px;font-size:12.5px;line-height:15.62px;color:#333333;left:-51.00px;width:1200px;text-align:center;transform-origin:50% 50%;">1</div>
<div class="t" style="top:697.83px;font-size:13px;line-height:16px;color:#141414;left:643.30px;transform-origin:0 50%;transform:scaleX(0.915);">Numeria – Biuro Rachunkowe</div>
<div class="t" style="top:697.71px;font-size:13px;line-height:16.25px;color:#141414;left:843.30px;transform-origin:0 50%;transform:scaleX(0.915);">Zielony Liść</div>
<div class="t" style="top:697.71px;font-size:13px;line-height:16.25px;color:#141414;left:1043.50px;transform-origin:0 50%;transform:scaleX(0.915);">Miesięczny</div>
<div class="t" style="top:697.71px;font-size:13px;line-height:16.25px;color:#141414;left:1143.30px;transform-origin:0 50%;transform:scaleX(0.915);">5252671944</div>
<div class="t" style="top:697.71px;font-size:13px;line-height:16.25px;color:#141414;left:1242.70px;transform-origin:0 50%;transform:scaleX(0.915);">2025</div>
<div class="t" style="top:697.71px;font-size:13px;line-height:16.25px;color:#141414;left:1303.00px;transform-origin:0 50%;transform:scaleX(0.915);">Sierpień</div>
<div class="t" style="top:697.71px;font-size:13px;line-height:16.25px;color:#141414;right:1987.00px;text-align:right;transform-origin:100% 50%;transform:scaleX(0.915);">175,00</div>
<div class="t" style="top:697.71px;font-size:13px;line-height:16.25px;color:#141414;left:1453.00px;transform-origin:0 50%;transform:scaleX(0.915);">2025-08-11 13:13</div>
<div class="t" style="top:697.71px;font-size:13px;line-height:16.25px;color:#141414;left:1563.00px;transform-origin:0 50%;transform:scaleX(0.915);">2025-09-08</div>
<div class="b" style="left:1663.00px;top:703.30px;width:68.00px;height:5.00px;background:#4db6ac;border-radius:3px;"></div>
<div class="t" style="top:697.71px;font-size:13px;line-height:16.25px;color:#141414;left:1738.40px;transform-origin:0 50%;transform:scaleX(0.99);">3/3</div>
<div class="t" style="top:697.71px;font-size:13px;line-height:16.25px;color:#141414;left:1843.00px;transform-origin:0 50%;transform:scaleX(0.915);">2025-08-01</div>
<div class="t" style="top:697.71px;font-size:13px;line-height:16.25px;color:#141414;left:1943.00px;transform-origin:0 50%;transform:scaleX(0.915);">2025-08-31</div>
<div class="t" style="top:697.71px;font-size:13px;line-height:16.25px;color:#141414;left:2042.80px;transform-origin:0 50%;transform:scaleX(0.915);">2025-09-20</div>
<div class="b" style="left:2143.00px;top:697.00px;width:499.00px;height:17.60px;background:#a5d6a7;border-radius:4px;"></div>
<div class="t" style="top:698.11px;font-size:13px;line-height:16.25px;color:#262626;left:1792.50px;width:1200px;text-align:center;transform-origin:50% 50%;transform:scaleX(0.915);">Zakończona</div>
<div class="t" style="top:681.03px;font-size:13px;line-height:16.4px;color:#141414;left:3153.70px;transform-origin:0 50%;transform:scaleX(0.915);">Zespół Kontroli<br>Księgowej<br>„Sigma”</div>
<div class="b" style="left:112.00px;top:773.00px;width:3258.00px;height:1.00px;background:#e3e3e3;"></div>
<div class="b" style="left:127.00px;top:746.10px;width:14.00px;height:14.00px;background:#ffffff;border:1.3px solid #a3a3a3;border-radius:2.5px;"></div>
<div class="b" style="left:169.00px;top:739.10px;width:28.00px;height:28.00px;background:#e3effb;border-radius:50%;"></div>
<svg class="b" style="left:175.00px;top:745.10px;" width="16" height="16" viewBox="0 0 16 16" fill="none"><rect x="0.5" y="0.5" width="15" height="15" stroke="#1c49ab" stroke-width="1"/><path d="M5.5 0.5V15.5M10.5 0.5V15.5" stroke="#1c49ab" stroke-width="1"/><path d="M2.0 2.5H4.0M2.0 4.5H4.0" stroke="#1c49ab" stroke-width="1"/><path d="M2.2 6.5H3.8" stroke="#1c49ab" stroke-width="0.8" opacity="0.7"/><circle cx="3.0" cy="12.4" r="1.25" stroke="#1c49ab" stroke-width="0.9"/><path d="M7.0 2.5H9.0M7.0 4.5H9.0" stroke="#1c49ab" stroke-width="1"/><path d="M7.2 6.5H8.8" stroke="#1c49ab" stroke-width="0.8" opacity="0.7"/><circle cx="8.0" cy="12.4" r="1.25" stroke="#1c49ab" stroke-width="0.9"/><path d="M12.0 2.5H14.0M12.0 4.5H14.0" stroke="#1c49ab" stroke-width="1"/><path d="M12.2 6.5H13.8" stroke="#1c49ab" stroke-width="0.8" opacity="0.7"/><circle cx="13.0" cy="12.4" r="1.25" stroke="#1c49ab" stroke-width="0.9"/></svg>
<div class="t" style="top:746.21px;font-size:13px;line-height:16.25px;color:#be1a2c;left:205.00px;transform-origin:0 50%;transform:scaleX(0.975);">2025/08/00001</div>
<div class="t" style="top:746.33px;font-size:13px;line-height:16px;color:#141414;left:322.80px;transform-origin:0 50%;transform:scaleX(0.915);">raport miesięczny</div>
<div class="b" style="left:540.00px;top:743.90px;width:18.00px;height:20.00px;background:#f2f2f2;border-radius:4px;"></div>
<div class="t" style="top:745.52px;font-size:12.5px;line-height:15.62px;color:#333333;left:-51.00px;width:1200px;text-align:center;transform-origin:50% 50%;">1</div>
<div class="t" style="top:737.53px;font-size:13px;line-height:16px;color:#141414;left:643.30px;transform-origin:0 50%;transform:scaleX(0.915);">Saldo i Partnerzy – Kancelaria<br>Księgowa</div>
<div class="t" style="top:746.21px;font-size:13px;line-height:16.25px;color:#141414;left:843.30px;transform-origin:0 50%;transform:scaleX(0.915);">InwestBud Development</div>
<div class="t" style="top:746.21px;font-size:13px;line-height:16.25px;color:#141414;left:1043.50px;transform-origin:0 50%;transform:scaleX(0.915);">Miesięczny</div>
<div class="t" style="top:746.21px;font-size:13px;line-height:16.25px;color:#141414;left:1143.30px;transform-origin:0 50%;transform:scaleX(0.915);">7342260981</div>
<div class="t" style="top:746.21px;font-size:13px;line-height:16.25px;color:#141414;left:1242.70px;transform-origin:0 50%;transform:scaleX(0.915);">2025</div>
<div class="t" style="top:746.21px;font-size:13px;line-height:16.25px;color:#141414;left:1303.00px;transform-origin:0 50%;transform:scaleX(0.915);">Sierpień</div>
<div class="t" style="top:746.21px;font-size:13px;line-height:16.25px;color:#141414;right:1987.00px;text-align:right;transform-origin:100% 50%;transform:scaleX(0.915);">0,00</div>
<div class="t" style="top:746.21px;font-size:13px;line-height:16.25px;color:#141414;left:1453.00px;transform-origin:0 50%;transform:scaleX(0.915);">2025-08-11 13:13</div>
<div class="t" style="top:746.21px;font-size:13px;line-height:16.25px;color:#141414;left:1563.00px;transform-origin:0 50%;transform:scaleX(0.915);">2025-09-20</div>
<div class="b" style="left:1663.00px;top:750.80px;width:68.00px;height:5.00px;background:#ececec;border-radius:3px;"></div>
<div class="t" style="top:746.21px;font-size:13px;line-height:16.25px;color:#141414;left:1738.40px;transform-origin:0 50%;transform:scaleX(0.99);">0/3</div>
<div class="t" style="top:746.21px;font-size:13px;line-height:16.25px;color:#141414;left:1843.00px;transform-origin:0 50%;transform:scaleX(0.915);">2025-08-01</div>
<div class="t" style="top:746.21px;font-size:13px;line-height:16.25px;color:#141414;left:1943.00px;transform-origin:0 50%;transform:scaleX(0.915);">2025-08-31</div>
<div class="t" style="top:746.21px;font-size:13px;line-height:16.25px;color:#141414;left:2042.80px;transform-origin:0 50%;transform:scaleX(0.915);">2025-09-20</div>
<div class="b" style="left:2143.00px;top:744.50px;width:499.00px;height:17.60px;background:#90caf9;border-radius:4px;"></div>
<div class="t" style="top:745.61px;font-size:13px;line-height:16.25px;color:#262626;left:1792.50px;width:1200px;text-align:center;transform-origin:50% 50%;transform:scaleX(0.915);">Nowa</div>
<div class="b" style="left:112.00px;top:813.00px;width:3258.00px;height:1.00px;background:#e3e3e3;"></div>
<div class="b" style="left:127.00px;top:786.10px;width:14.00px;height:14.00px;background:#ffffff;border:1.3px solid #a3a3a3;border-radius:2.5px;"></div>
<div class="b" style="left:169.00px;top:779.10px;width:28.00px;height:28.00px;background:#e3effb;border-radius:50%;"></div>
<svg class="b" style="left:175.00px;top:785.10px;" width="16" height="16" viewBox="0 0 16 16" fill="none"><rect x="0.5" y="0.5" width="15" height="15" stroke="#1c49ab" stroke-width="1"/><path d="M5.5 0.5V15.5M10.5 0.5V15.5" stroke="#1c49ab" stroke-width="1"/><path d="M2.0 2.5H4.0M2.0 4.5H4.0" stroke="#1c49ab" stroke-width="1"/><path d="M2.2 6.5H3.8" stroke="#1c49ab" stroke-width="0.8" opacity="0.7"/><circle cx="3.0" cy="12.4" r="1.25" stroke="#1c49ab" stroke-width="0.9"/><path d="M7.0 2.5H9.0M7.0 4.5H9.0" stroke="#1c49ab" stroke-width="1"/><path d="M7.2 6.5H8.8" stroke="#1c49ab" stroke-width="0.8" opacity="0.7"/><circle cx="8.0" cy="12.4" r="1.25" stroke="#1c49ab" stroke-width="0.9"/><path d="M12.0 2.5H14.0M12.0 4.5H14.0" stroke="#1c49ab" stroke-width="1"/><path d="M12.2 6.5H13.8" stroke="#1c49ab" stroke-width="0.8" opacity="0.7"/><circle cx="13.0" cy="12.4" r="1.25" stroke="#1c49ab" stroke-width="0.9"/></svg>
<div class="t" style="top:785.21px;font-size:13px;line-height:16.25px;color:#be1a2c;left:205.00px;transform-origin:0 50%;transform:scaleX(0.975);">2025/08/00002</div>
<div class="t" style="top:785.33px;font-size:13px;line-height:16px;color:#141414;left:322.80px;transform-origin:0 50%;transform:scaleX(0.915);">DRA</div>
<div class="b" style="left:540.00px;top:783.90px;width:18.00px;height:20.00px;background:#f2f2f2;border-radius:4px;"></div>
<div class="t" style="top:785.52px;font-size:12.5px;line-height:15.62px;color:#333333;left:-51.00px;width:1200px;text-align:center;transform-origin:50% 50%;">1</div>
<div class="t" style="top:776.53px;font-size:13px;line-height:16px;color:#141414;left:643.30px;transform-origin:0 50%;transform:scaleX(0.915);">Saldo i Partnerzy – Kancelaria<br>Księgowa</div>
<div class="t" style="top:785.21px;font-size:13px;line-height:16.25px;color:#141414;left:843.30px;transform-origin:0 50%;transform:scaleX(0.915);">InwestBud Development</div>
<div class="t" style="top:785.21px;font-size:13px;line-height:16.25px;color:#141414;left:1043.50px;transform-origin:0 50%;transform:scaleX(0.915);">Miesięczny</div>
<div class="t" style="top:785.21px;font-size:13px;line-height:16.25px;color:#141414;left:1143.30px;transform-origin:0 50%;transform:scaleX(0.915);">7342260981</div>
<div class="t" style="top:785.21px;font-size:13px;line-height:16.25px;color:#141414;left:1242.70px;transform-origin:0 50%;transform:scaleX(0.915);">2025</div>
<div class="t" style="top:785.21px;font-size:13px;line-height:16.25px;color:#141414;left:1303.00px;transform-origin:0 50%;transform:scaleX(0.915);">Sierpień</div>
<div class="t" style="top:785.21px;font-size:13px;line-height:16.25px;color:#141414;right:1987.00px;text-align:right;transform-origin:100% 50%;transform:scaleX(0.915);">0,00</div>
<div class="t" style="top:785.21px;font-size:13px;line-height:16.25px;color:#141414;left:1453.00px;transform-origin:0 50%;transform:scaleX(0.915);">2025-08-11 13:13</div>
<div class="t" style="top:785.21px;font-size:13px;line-height:16.25px;color:#141414;left:1563.00px;transform-origin:0 50%;transform:scaleX(0.915);">2025-09-20</div>
<div class="b" style="left:1663.00px;top:790.80px;width:68.00px;height:5.00px;background:#ececec;border-radius:3px;"></div>
<div class="t" style="top:785.21px;font-size:13px;line-height:16.25px;color:#141414;left:1738.40px;transform-origin:0 50%;transform:scaleX(0.99);">0/3</div>
<div class="t" style="top:785.21px;font-size:13px;line-height:16.25px;color:#141414;left:1843.00px;transform-origin:0 50%;transform:scaleX(0.915);">2025-08-01</div>
<div class="t" style="top:785.21px;font-size:13px;line-height:16.25px;color:#141414;left:1943.00px;transform-origin:0 50%;transform:scaleX(0.915);">2025-08-31</div>
<div class="t" style="top:785.21px;font-size:13px;line-height:16.25px;color:#141414;left:2042.80px;transform-origin:0 50%;transform:scaleX(0.915);">2025-09-20</div>
<div class="b" style="left:2143.00px;top:784.50px;width:499.00px;height:17.60px;background:#fddf82;border-radius:4px;"></div>
<div class="t" style="top:785.61px;font-size:13px;line-height:16.25px;color:#262626;left:1792.50px;width:1200px;text-align:center;transform-origin:50% 50%;transform:scaleX(0.915);">W trakcie</div>
<div class="b" style="left:112.00px;top:852.00px;width:3258.00px;height:1.00px;background:#e3e3e3;"></div>
<div class="b" style="left:127.00px;top:825.60px;width:14.00px;height:14.00px;background:#ffffff;border:1.3px solid #a3a3a3;border-radius:2.5px;"></div>
<div class="b" style="left:169.00px;top:818.60px;width:28.00px;height:28.00px;background:#e3effb;border-radius:50%;"></div>
<svg class="b" style="left:175.00px;top:824.60px;" width="16" height="16" viewBox="0 0 16 16" fill="none"><rect x="0.5" y="0.5" width="15" height="15" stroke="#1c49ab" stroke-width="1"/><path d="M5.5 0.5V15.5M10.5 0.5V15.5" stroke="#1c49ab" stroke-width="1"/><path d="M2.0 2.5H4.0M2.0 4.5H4.0" stroke="#1c49ab" stroke-width="1"/><path d="M2.2 6.5H3.8" stroke="#1c49ab" stroke-width="0.8" opacity="0.7"/><circle cx="3.0" cy="12.4" r="1.25" stroke="#1c49ab" stroke-width="0.9"/><path d="M7.0 2.5H9.0M7.0 4.5H9.0" stroke="#1c49ab" stroke-width="1"/><path d="M7.2 6.5H8.8" stroke="#1c49ab" stroke-width="0.8" opacity="0.7"/><circle cx="8.0" cy="12.4" r="1.25" stroke="#1c49ab" stroke-width="0.9"/><path d="M12.0 2.5H14.0M12.0 4.5H14.0" stroke="#1c49ab" stroke-width="1"/><path d="M12.2 6.5H13.8" stroke="#1c49ab" stroke-width="0.8" opacity="0.7"/><circle cx="13.0" cy="12.4" r="1.25" stroke="#1c49ab" stroke-width="0.9"/></svg>
<div class="t" style="top:824.71px;font-size:13px;line-height:16.25px;color:#be1a2c;left:205.00px;transform-origin:0 50%;transform:scaleX(0.975);">2025/08/00003</div>
<div class="t" style="top:824.83px;font-size:13px;line-height:16px;color:#141414;left:322.80px;transform-origin:0 50%;transform:scaleX(0.915);">raport kadrowy</div>
<div class="b" style="left:540.00px;top:823.40px;width:18.00px;height:20.00px;background:#f2f2f2;border-radius:4px;"></div>
<div class="t" style="top:825.02px;font-size:12.5px;line-height:15.62px;color:#333333;left:-51.00px;width:1200px;text-align:center;transform-origin:50% 50%;">1</div>
<div class="t" style="top:816.03px;font-size:13px;line-height:16px;color:#141414;left:643.30px;transform-origin:0 50%;transform:scaleX(0.915);">Saldo i Partnerzy – Kancelaria<br>Księgowa</div>
<div class="t" style="top:824.71px;font-size:13px;line-height:16.25px;color:#141414;left:843.30px;transform-origin:0 50%;transform:scaleX(0.915);">InwestBud Development</div>
<div class="t" style="top:824.71px;font-size:13px;line-height:16.25px;color:#141414;left:1043.50px;transform-origin:0 50%;transform:scaleX(0.915);">Miesięczny</div>
<div class="t" style="top:824.71px;font-size:13px;line-height:16.25px;color:#141414;left:1143.30px;transform-origin:0 50%;transform:scaleX(0.915);">7342260981</div>
<div class="t" style="top:824.71px;font-size:13px;line-height:16.25px;color:#141414;left:1242.70px;transform-origin:0 50%;transform:scaleX(0.915);">2025</div>
<div class="t" style="top:824.71px;font-size:13px;line-height:16.25px;color:#141414;left:1303.00px;transform-origin:0 50%;transform:scaleX(0.915);">Sierpień</div>
<div class="t" style="top:824.71px;font-size:13px;line-height:16.25px;color:#141414;right:1987.00px;text-align:right;transform-origin:100% 50%;transform:scaleX(0.915);">0,00</div>
<div class="t" style="top:824.71px;font-size:13px;line-height:16.25px;color:#141414;left:1453.00px;transform-origin:0 50%;transform:scaleX(0.915);">2025-08-11 13:13</div>
<div class="t" style="top:824.71px;font-size:13px;line-height:16.25px;color:#141414;left:1563.00px;transform-origin:0 50%;transform:scaleX(0.915);">2025-09-20</div>
<div class="b" style="left:1663.00px;top:830.30px;width:68.00px;height:5.00px;background:#ececec;border-radius:3px;"></div>
<div class="t" style="top:824.71px;font-size:13px;line-height:16.25px;color:#141414;left:1738.40px;transform-origin:0 50%;transform:scaleX(0.99);">0/3</div>
<div class="t" style="top:824.71px;font-size:13px;line-height:16.25px;color:#141414;left:1843.00px;transform-origin:0 50%;transform:scaleX(0.915);">2025-08-01</div>
<div class="t" style="top:824.71px;font-size:13px;line-height:16.25px;color:#141414;left:1943.00px;transform-origin:0 50%;transform:scaleX(0.915);">2025-08-31</div>
<div class="t" style="top:824.71px;font-size:13px;line-height:16.25px;color:#141414;left:2042.80px;transform-origin:0 50%;transform:scaleX(0.915);">2025-09-20</div>
<div class="b" style="left:2143.00px;top:824.00px;width:499.00px;height:17.60px;background:#90caf9;border-radius:4px;"></div>
<div class="t" style="top:825.11px;font-size:13px;line-height:16.25px;color:#262626;left:1792.50px;width:1200px;text-align:center;transform-origin:50% 50%;transform:scaleX(0.915);">Nowa</div>
<div class="b" style="left:112.00px;top:892.00px;width:3258.00px;height:1.00px;background:#e3e3e3;"></div>
<div class="b" style="left:127.00px;top:865.10px;width:14.00px;height:14.00px;background:#ffffff;border:1.3px solid #a3a3a3;border-radius:2.5px;"></div>
<div class="b" style="left:169.00px;top:858.10px;width:28.00px;height:28.00px;background:#e3effb;border-radius:50%;"></div>
<svg class="b" style="left:175.00px;top:864.10px;" width="16" height="16" viewBox="0 0 16 16" fill="none"><rect x="0.5" y="0.5" width="15" height="15" stroke="#1c49ab" stroke-width="1"/><path d="M5.5 0.5V15.5M10.5 0.5V15.5" stroke="#1c49ab" stroke-width="1"/><path d="M2.0 2.5H4.0M2.0 4.5H4.0" stroke="#1c49ab" stroke-width="1"/><path d="M2.2 6.5H3.8" stroke="#1c49ab" stroke-width="0.8" opacity="0.7"/><circle cx="3.0" cy="12.4" r="1.25" stroke="#1c49ab" stroke-width="0.9"/><path d="M7.0 2.5H9.0M7.0 4.5H9.0" stroke="#1c49ab" stroke-width="1"/><path d="M7.2 6.5H8.8" stroke="#1c49ab" stroke-width="0.8" opacity="0.7"/><circle cx="8.0" cy="12.4" r="1.25" stroke="#1c49ab" stroke-width="0.9"/><path d="M12.0 2.5H14.0M12.0 4.5H14.0" stroke="#1c49ab" stroke-width="1"/><path d="M12.2 6.5H13.8" stroke="#1c49ab" stroke-width="0.8" opacity="0.7"/><circle cx="13.0" cy="12.4" r="1.25" stroke="#1c49ab" stroke-width="0.9"/></svg>
<div class="t" style="top:864.21px;font-size:13px;line-height:16.25px;color:#be1a2c;left:205.00px;transform-origin:0 50%;transform:scaleX(0.975);">2025/08/00004</div>
<div class="t" style="top:855.53px;font-size:13px;line-height:16px;color:#141414;left:322.80px;transform-origin:0 50%;transform:scaleX(0.915);">ewidencjonowanie danych<br>księgowych</div>
<div class="b" style="left:540.00px;top:862.90px;width:18.00px;height:20.00px;background:#f2f2f2;border-radius:4px;"></div>
<div class="t" style="top:864.52px;font-size:12.5px;line-height:15.62px;color:#333333;left:-51.00px;width:1200px;text-align:center;transform-origin:50% 50%;">1</div>
<div class="t" style="top:855.53px;font-size:13px;line-height:16px;color:#141414;left:643.30px;transform-origin:0 50%;transform:scaleX(0.915);">Saldo i Partnerzy – Kancelaria<br>Księgowa</div>
<div class="t" style="top:864.21px;font-size:13px;line-height:16.25px;color:#141414;left:843.30px;transform-origin:0 50%;transform:scaleX(0.915);">InwestBud Development</div>
<div class="t" style="top:864.21px;font-size:13px;line-height:16.25px;color:#141414;left:1043.50px;transform-origin:0 50%;transform:scaleX(0.915);">Miesięczny</div>
<div class="t" style="top:864.21px;font-size:13px;line-height:16.25px;color:#141414;left:1143.30px;transform-origin:0 50%;transform:scaleX(0.915);">7342260981</div>
<div class="t" style="top:864.21px;font-size:13px;line-height:16.25px;color:#141414;left:1242.70px;transform-origin:0 50%;transform:scaleX(0.915);">2025</div>
<div class="t" style="top:864.21px;font-size:13px;line-height:16.25px;color:#141414;left:1303.00px;transform-origin:0 50%;transform:scaleX(0.915);">Sierpień</div>
<div class="t" style="top:864.21px;font-size:13px;line-height:16.25px;color:#141414;right:1987.00px;text-align:right;transform-origin:100% 50%;transform:scaleX(0.915);">0,00</div>
<div class="t" style="top:864.21px;font-size:13px;line-height:16.25px;color:#141414;left:1453.00px;transform-origin:0 50%;transform:scaleX(0.915);">2025-08-11 13:13</div>
<div class="t" style="top:864.21px;font-size:13px;line-height:16.25px;color:#141414;left:1563.00px;transform-origin:0 50%;transform:scaleX(0.915);">2025-09-20</div>
<div class="b" style="left:1663.00px;top:869.80px;width:68.00px;height:5.00px;background:#ececec;border-radius:3px;"></div>
<div class="t" style="top:864.21px;font-size:13px;line-height:16.25px;color:#141414;left:1738.40px;transform-origin:0 50%;transform:scaleX(0.99);">0/3</div>
<div class="t" style="top:864.21px;font-size:13px;line-height:16.25px;color:#141414;left:1843.00px;transform-origin:0 50%;transform:scaleX(0.915);">2025-08-01</div>
<div class="t" style="top:864.21px;font-size:13px;line-height:16.25px;color:#141414;left:1943.00px;transform-origin:0 50%;transform:scaleX(0.915);">2025-08-31</div>
<div class="t" style="top:864.21px;font-size:13px;line-height:16.25px;color:#141414;left:2042.80px;transform-origin:0 50%;transform:scaleX(0.915);">2025-09-20</div>
<div class="b" style="left:2143.00px;top:863.50px;width:499.00px;height:17.60px;background:#fddf82;border-radius:4px;"></div>
<div class="t" style="top:864.61px;font-size:13px;line-height:16.25px;color:#262626;left:1792.50px;width:1200px;text-align:center;transform-origin:50% 50%;transform:scaleX(0.915);">W trakcie</div>
<div class="b" style="left:112.00px;top:931.00px;width:3258.00px;height:1.00px;background:#e3e3e3;"></div>
<div class="b" style="left:127.00px;top:904.60px;width:14.00px;height:14.00px;background:#ffffff;border:1.3px solid #a3a3a3;border-radius:2.5px;"></div>
<div class="b" style="left:169.00px;top:897.60px;width:28.00px;height:28.00px;background:#e3effb;border-radius:50%;"></div>
<svg class="b" style="left:175.00px;top:903.60px;" width="16" height="16" viewBox="0 0 16 16" fill="none"><rect x="0.5" y="0.5" width="15" height="15" stroke="#1c49ab" stroke-width="1"/><path d="M5.5 0.5V15.5M10.5 0.5V15.5" stroke="#1c49ab" stroke-width="1"/><path d="M2.0 2.5H4.0M2.0 4.5H4.0" stroke="#1c49ab" stroke-width="1"/><path d="M2.2 6.5H3.8" stroke="#1c49ab" stroke-width="0.8" opacity="0.7"/><circle cx="3.0" cy="12.4" r="1.25" stroke="#1c49ab" stroke-width="0.9"/><path d="M7.0 2.5H9.0M7.0 4.5H9.0" stroke="#1c49ab" stroke-width="1"/><path d="M7.2 6.5H8.8" stroke="#1c49ab" stroke-width="0.8" opacity="0.7"/><circle cx="8.0" cy="12.4" r="1.25" stroke="#1c49ab" stroke-width="0.9"/><path d="M12.0 2.5H14.0M12.0 4.5H14.0" stroke="#1c49ab" stroke-width="1"/><path d="M12.2 6.5H13.8" stroke="#1c49ab" stroke-width="0.8" opacity="0.7"/><circle cx="13.0" cy="12.4" r="1.25" stroke="#1c49ab" stroke-width="0.9"/></svg>
<div class="t" style="top:903.71px;font-size:13px;line-height:16.25px;color:#be1a2c;left:205.00px;transform-origin:0 50%;transform:scaleX(0.975);">2025/08/00005</div>
<div class="t" style="top:895.03px;font-size:13px;line-height:16px;color:#141414;left:322.80px;transform-origin:0 50%;transform:scaleX(0.915);">ewidencjonowanie danych<br>kadrowych</div>
<div class="b" style="left:540.00px;top:902.40px;width:18.00px;height:20.00px;background:#f2f2f2;border-radius:4px;"></div>
<div class="t" style="top:904.02px;font-size:12.5px;line-height:15.62px;color:#333333;left:-51.00px;width:1200px;text-align:center;transform-origin:50% 50%;">1</div>
<div class="t" style="top:895.03px;font-size:13px;line-height:16px;color:#141414;left:643.30px;transform-origin:0 50%;transform:scaleX(0.915);">Saldo i Partnerzy – Kancelaria<br>Księgowa</div>
<div class="t" style="top:903.71px;font-size:13px;line-height:16.25px;color:#141414;left:843.30px;transform-origin:0 50%;transform:scaleX(0.915);">InwestBud Development</div>
<div class="t" style="top:903.71px;font-size:13px;line-height:16.25px;color:#141414;left:1043.50px;transform-origin:0 50%;transform:scaleX(0.915);">Miesięczny</div>
<div class="t" style="top:903.71px;font-size:13px;line-height:16.25px;color:#141414;left:1143.30px;transform-origin:0 50%;transform:scaleX(0.915);">7342260981</div>
<div class="t" style="top:903.71px;font-size:13px;line-height:16.25px;color:#141414;left:1242.70px;transform-origin:0 50%;transform:scaleX(0.915);">2025</div>
<div class="t" style="top:903.71px;font-size:13px;line-height:16.25px;color:#141414;left:1303.00px;transform-origin:0 50%;transform:scaleX(0.915);">Sierpień</div>
<div class="t" style="top:903.71px;font-size:13px;line-height:16.25px;color:#141414;right:1987.00px;text-align:right;transform-origin:100% 50%;transform:scaleX(0.915);">0,00</div>
<div class="t" style="top:903.71px;font-size:13px;line-height:16.25px;color:#141414;left:1453.00px;transform-origin:0 50%;transform:scaleX(0.915);">2025-08-11 13:13</div>
<div class="t" style="top:903.71px;font-size:13px;line-height:16.25px;color:#141414;left:1563.00px;transform-origin:0 50%;transform:scaleX(0.915);">2025-09-20</div>
<div class="b" style="left:1663.00px;top:909.30px;width:68.00px;height:5.00px;background:#4db6ac;border-radius:3px;"></div>
<div class="t" style="top:903.71px;font-size:13px;line-height:16.25px;color:#141414;left:1738.40px;transform-origin:0 50%;transform:scaleX(0.99);">3/3</div>
<div class="t" style="top:903.71px;font-size:13px;line-height:16.25px;color:#141414;left:1843.00px;transform-origin:0 50%;transform:scaleX(0.915);">2025-08-01</div>
<div class="t" style="top:903.71px;font-size:13px;line-height:16.25px;color:#141414;left:1943.00px;transform-origin:0 50%;transform:scaleX(0.915);">2025-08-31</div>
<div class="t" style="top:903.71px;font-size:13px;line-height:16.25px;color:#141414;left:2042.80px;transform-origin:0 50%;transform:scaleX(0.915);">2025-09-20</div>
<div class="b" style="left:2143.00px;top:903.00px;width:499.00px;height:17.60px;background:#c8a498;border-radius:4px;"></div>
<div class="t" style="top:904.11px;font-size:13px;line-height:16.25px;color:#262626;left:1792.50px;width:1200px;text-align:center;transform-origin:50% 50%;transform:scaleX(0.915);">Z zastrzeżeniem</div>
<div class="b" style="left:112.00px;top:971.00px;width:3258.00px;height:1.00px;background:#e3e3e3;"></div>
<div class="b" style="left:127.00px;top:944.10px;width:14.00px;height:14.00px;background:#ffffff;border:1.3px solid #a3a3a3;border-radius:2.5px;"></div>
<div class="b" style="left:169.00px;top:937.10px;width:28.00px;height:28.00px;background:#e3effb;border-radius:50%;"></div>
<svg class="b" style="left:175.00px;top:943.10px;" width="16" height="16" viewBox="0 0 16 16" fill="none"><rect x="0.5" y="0.5" width="15" height="15" stroke="#1c49ab" stroke-width="1"/><path d="M5.5 0.5V15.5M10.5 0.5V15.5" stroke="#1c49ab" stroke-width="1"/><path d="M2.0 2.5H4.0M2.0 4.5H4.0" stroke="#1c49ab" stroke-width="1"/><path d="M2.2 6.5H3.8" stroke="#1c49ab" stroke-width="0.8" opacity="0.7"/><circle cx="3.0" cy="12.4" r="1.25" stroke="#1c49ab" stroke-width="0.9"/><path d="M7.0 2.5H9.0M7.0 4.5H9.0" stroke="#1c49ab" stroke-width="1"/><path d="M7.2 6.5H8.8" stroke="#1c49ab" stroke-width="0.8" opacity="0.7"/><circle cx="8.0" cy="12.4" r="1.25" stroke="#1c49ab" stroke-width="0.9"/><path d="M12.0 2.5H14.0M12.0 4.5H14.0" stroke="#1c49ab" stroke-width="1"/><path d="M12.2 6.5H13.8" stroke="#1c49ab" stroke-width="0.8" opacity="0.7"/><circle cx="13.0" cy="12.4" r="1.25" stroke="#1c49ab" stroke-width="0.9"/></svg>
<div class="t" style="top:943.21px;font-size:13px;line-height:16.25px;color:#be1a2c;left:205.00px;transform-origin:0 50%;transform:scaleX(0.975);">2025/08/00006</div>
<div class="t" style="top:943.33px;font-size:13px;line-height:16px;color:#141414;left:322.80px;transform-origin:0 50%;transform:scaleX(0.915);">raport miesięczny</div>
<div class="b" style="left:540.00px;top:941.90px;width:18.00px;height:20.00px;background:#f2f2f2;border-radius:4px;"></div>
<div class="t" style="top:943.52px;font-size:12.5px;line-height:15.62px;color:#333333;left:-51.00px;width:1200px;text-align:center;transform-origin:50% 50%;">1</div>
<div class="t" style="top:934.53px;font-size:13px;line-height:16px;color:#141414;left:643.30px;transform-origin:0 50%;transform:scaleX(0.915);">Saldo i Partnerzy – Kancelaria<br>Księgowa</div>
<div class="t" style="top:943.21px;font-size:13px;line-height:16.25px;color:#141414;left:843.30px;transform-origin:0 50%;transform:scaleX(0.915);">MedProtect Group</div>
<div class="t" style="top:943.21px;font-size:13px;line-height:16.25px;color:#141414;left:1043.50px;transform-origin:0 50%;transform:scaleX(0.915);">Miesięczny</div>
<div class="t" style="top:943.21px;font-size:13px;line-height:16.25px;color:#141414;left:1143.30px;transform-origin:0 50%;transform:scaleX(0.915);">9121846123</div>
<div class="t" style="top:943.21px;font-size:13px;line-height:16.25px;color:#141414;left:1242.70px;transform-origin:0 50%;transform:scaleX(0.915);">2025</div>
<div class="t" style="top:943.21px;font-size:13px;line-height:16.25px;color:#141414;left:1303.00px;transform-origin:0 50%;transform:scaleX(0.915);">Sierpień</div>
<div class="t" style="top:943.21px;font-size:13px;line-height:16.25px;color:#141414;right:1987.00px;text-align:right;transform-origin:100% 50%;transform:scaleX(0.915);">0,00</div>
<div class="t" style="top:943.21px;font-size:13px;line-height:16.25px;color:#141414;left:1453.00px;transform-origin:0 50%;transform:scaleX(0.915);">2025-08-11 13:13</div>
<div class="t" style="top:943.21px;font-size:13px;line-height:16.25px;color:#141414;left:1563.00px;transform-origin:0 50%;transform:scaleX(0.915);">2025-09-20</div>
<div class="b" style="left:1663.00px;top:948.80px;width:68.00px;height:5.00px;background:#ececec;border-radius:3px;"></div>
<div class="t" style="top:943.21px;font-size:13px;line-height:16.25px;color:#141414;left:1738.40px;transform-origin:0 50%;transform:scaleX(0.99);">0/3</div>
<div class="t" style="top:943.21px;font-size:13px;line-height:16.25px;color:#141414;left:1843.00px;transform-origin:0 50%;transform:scaleX(0.915);">2025-08-01</div>
<div class="t" style="top:943.21px;font-size:13px;line-height:16.25px;color:#141414;left:1943.00px;transform-origin:0 50%;transform:scaleX(0.915);">2025-08-31</div>
<div class="t" style="top:943.21px;font-size:13px;line-height:16.25px;color:#141414;left:2042.80px;transform-origin:0 50%;transform:scaleX(0.915);">2025-09-20</div>
<div class="b" style="left:2143.00px;top:942.50px;width:499.00px;height:17.60px;background:#90caf9;border-radius:4px;"></div>
<div class="t" style="top:943.61px;font-size:13px;line-height:16.25px;color:#262626;left:1792.50px;width:1200px;text-align:center;transform-origin:50% 50%;transform:scaleX(0.915);">Nowa</div>
<div class="b" style="left:112.00px;top:1010.00px;width:3258.00px;height:1.00px;background:#e3e3e3;"></div>
<div class="b" style="left:127.00px;top:983.60px;width:14.00px;height:14.00px;background:#ffffff;border:1.3px solid #a3a3a3;border-radius:2.5px;"></div>
<div class="b" style="left:169.00px;top:976.60px;width:28.00px;height:28.00px;background:#e3effb;border-radius:50%;"></div>
<svg class="b" style="left:175.00px;top:982.60px;" width="16" height="16" viewBox="0 0 16 16" fill="none"><rect x="0.5" y="0.5" width="15" height="15" stroke="#1c49ab" stroke-width="1"/><path d="M5.5 0.5V15.5M10.5 0.5V15.5" stroke="#1c49ab" stroke-width="1"/><path d="M2.0 2.5H4.0M2.0 4.5H4.0" stroke="#1c49ab" stroke-width="1"/><path d="M2.2 6.5H3.8" stroke="#1c49ab" stroke-width="0.8" opacity="0.7"/><circle cx="3.0" cy="12.4" r="1.25" stroke="#1c49ab" stroke-width="0.9"/><path d="M7.0 2.5H9.0M7.0 4.5H9.0" stroke="#1c49ab" stroke-width="1"/><path d="M7.2 6.5H8.8" stroke="#1c49ab" stroke-width="0.8" opacity="0.7"/><circle cx="8.0" cy="12.4" r="1.25" stroke="#1c49ab" stroke-width="0.9"/><path d="M12.0 2.5H14.0M12.0 4.5H14.0" stroke="#1c49ab" stroke-width="1"/><path d="M12.2 6.5H13.8" stroke="#1c49ab" stroke-width="0.8" opacity="0.7"/><circle cx="13.0" cy="12.4" r="1.25" stroke="#1c49ab" stroke-width="0.9"/></svg>
<div class="t" style="top:982.71px;font-size:13px;line-height:16.25px;color:#be1a2c;left:205.00px;transform-origin:0 50%;transform:scaleX(0.975);">2025/08/00007</div>
<div class="t" style="top:982.83px;font-size:13px;line-height:16px;color:#141414;left:322.80px;transform-origin:0 50%;transform:scaleX(0.915);">DRA</div>
<div class="b" style="left:540.00px;top:981.40px;width:18.00px;height:20.00px;background:#f2f2f2;border-radius:4px;"></div>
<div class="t" style="top:983.02px;font-size:12.5px;line-height:15.62px;color:#333333;left:-51.00px;width:1200px;text-align:center;transform-origin:50% 50%;">1</div>
<div class="t" style="top:974.03px;font-size:13px;line-height:16px;color:#141414;left:643.30px;transform-origin:0 50%;transform:scaleX(0.915);">Saldo i Partnerzy – Kancelaria<br>Księgowa</div>
<div class="t" style="top:982.71px;font-size:13px;line-height:16.25px;color:#141414;left:843.30px;transform-origin:0 50%;transform:scaleX(0.915);">MedProtect Group</div>
<div class="t" style="top:982.71px;font-size:13px;line-height:16.25px;color:#141414;left:1043.50px;transform-origin:0 50%;transform:scaleX(0.915);">Miesięczny</div>
<div class="t" style="top:982.71px;font-size:13px;line-height:16.25px;color:#141414;left:1143.30px;transform-origin:0 50%;transform:scaleX(0.915);">9121846123</div>
<div class="t" style="top:982.71px;font-size:13px;line-height:16.25px;color:#141414;left:1242.70px;transform-origin:0 50%;transform:scaleX(0.915);">2025</div>
<div class="t" style="top:982.71px;font-size:13px;line-height:16.25px;color:#141414;left:1303.00px;transform-origin:0 50%;transform:scaleX(0.915);">Sierpień</div>
<div class="t" style="top:982.71px;font-size:13px;line-height:16.25px;color:#141414;right:1987.00px;text-align:right;transform-origin:100% 50%;transform:scaleX(0.915);">0,00</div>
<div class="t" style="top:982.71px;font-size:13px;line-height:16.25px;color:#141414;left:1453.00px;transform-origin:0 50%;transform:scaleX(0.915);">2025-08-11 13:13</div>
<div class="t" style="top:982.71px;font-size:13px;line-height:16.25px;color:#141414;left:1563.00px;transform-origin:0 50%;transform:scaleX(0.915);">2025-09-20</div>
<div class="b" style="left:1663.00px;top:988.30px;width:68.00px;height:5.00px;background:#ececec;border-radius:3px;"></div>
<div class="t" style="top:982.71px;font-size:13px;line-height:16.25px;color:#141414;left:1738.40px;transform-origin:0 50%;transform:scaleX(0.99);">0/3</div>
<div class="t" style="top:982.71px;font-size:13px;line-height:16.25px;color:#141414;left:1843.00px;transform-origin:0 50%;transform:scaleX(0.915);">2025-08-01</div>
<div class="t" style="top:982.71px;font-size:13px;line-height:16.25px;color:#141414;left:1943.00px;transform-origin:0 50%;transform:scaleX(0.915);">2025-08-31</div>
<div class="t" style="top:982.71px;font-size:13px;line-height:16.25px;color:#141414;left:2042.80px;transform-origin:0 50%;transform:scaleX(0.915);">2025-09-20</div>
<div class="b" style="left:2143.00px;top:982.00px;width:499.00px;height:17.60px;background:#90caf9;border-radius:4px;"></div>
<div class="t" style="top:983.11px;font-size:13px;line-height:16.25px;color:#262626;left:1792.50px;width:1200px;text-align:center;transform-origin:50% 50%;transform:scaleX(0.915);">Nowa</div>
<div class="b" style="left:112.00px;top:1050.00px;width:3258.00px;height:1.00px;background:#e3e3e3;"></div>
<div class="b" style="left:127.00px;top:1023.10px;width:14.00px;height:14.00px;background:#ffffff;border:1.3px solid #a3a3a3;border-radius:2.5px;"></div>
<div class="b" style="left:169.00px;top:1016.10px;width:28.00px;height:28.00px;background:#e3effb;border-radius:50%;"></div>
<svg class="b" style="left:175.00px;top:1022.10px;" width="16" height="16" viewBox="0 0 16 16" fill="none"><rect x="0.5" y="0.5" width="15" height="15" stroke="#1c49ab" stroke-width="1"/><path d="M5.5 0.5V15.5M10.5 0.5V15.5" stroke="#1c49ab" stroke-width="1"/><path d="M2.0 2.5H4.0M2.0 4.5H4.0" stroke="#1c49ab" stroke-width="1"/><path d="M2.2 6.5H3.8" stroke="#1c49ab" stroke-width="0.8" opacity="0.7"/><circle cx="3.0" cy="12.4" r="1.25" stroke="#1c49ab" stroke-width="0.9"/><path d="M7.0 2.5H9.0M7.0 4.5H9.0" stroke="#1c49ab" stroke-width="1"/><path d="M7.2 6.5H8.8" stroke="#1c49ab" stroke-width="0.8" opacity="0.7"/><circle cx="8.0" cy="12.4" r="1.25" stroke="#1c49ab" stroke-width="0.9"/><path d="M12.0 2.5H14.0M12.0 4.5H14.0" stroke="#1c49ab" stroke-width="1"/><path d="M12.2 6.5H13.8" stroke="#1c49ab" stroke-width="0.8" opacity="0.7"/><circle cx="13.0" cy="12.4" r="1.25" stroke="#1c49ab" stroke-width="0.9"/></svg>
<div class="t" style="top:1023.21px;font-size:13px;line-height:16.25px;color:#be1a2c;left:205.00px;transform-origin:0 50%;transform:scaleX(0.975);">2025/08/00008</div>
<div class="t" style="top:1023.33px;font-size:13px;line-height:16px;color:#141414;left:322.80px;transform-origin:0 50%;transform:scaleX(0.915);">raport kadrowy</div>
<div class="b" style="left:540.00px;top:1020.90px;width:18.00px;height:20.00px;background:#f2f2f2;border-radius:4px;"></div>
<div class="t" style="top:1022.51px;font-size:12.5px;line-height:15.62px;color:#333333;left:-51.00px;width:1200px;text-align:center;transform-origin:50% 50%;">1</div>
<div class="t" style="top:1014.53px;font-size:13px;line-height:16px;color:#141414;left:643.30px;transform-origin:0 50%;transform:scaleX(0.915);">Saldo i Partnerzy – Kancelaria<br>Księgowa</div>
<div class="t" style="top:1023.21px;font-size:13px;line-height:16.25px;color:#141414;left:843.30px;transform-origin:0 50%;transform:scaleX(0.915);">MedProtect Group</div>
<div class="t" style="top:1023.21px;font-size:13px;line-height:16.25px;color:#141414;left:1043.50px;transform-origin:0 50%;transform:scaleX(0.915);">Miesięczny</div>
<div class="t" style="top:1023.21px;font-size:13px;line-height:16.25px;color:#141414;left:1143.30px;transform-origin:0 50%;transform:scaleX(0.915);">9121846123</div>
<div class="t" style="top:1023.21px;font-size:13px;line-height:16.25px;color:#141414;left:1242.70px;transform-origin:0 50%;transform:scaleX(0.915);">2025</div>
<div class="t" style="top:1023.21px;font-size:13px;line-height:16.25px;color:#141414;left:1303.00px;transform-origin:0 50%;transform:scaleX(0.915);">Sierpień</div>
<div class="t" style="top:1023.21px;font-size:13px;line-height:16.25px;color:#141414;right:1987.00px;text-align:right;transform-origin:100% 50%;transform:scaleX(0.915);">0,00</div>
<div class="t" style="top:1023.21px;font-size:13px;line-height:16.25px;color:#141414;left:1453.00px;transform-origin:0 50%;transform:scaleX(0.915);">2025-08-11 13:13</div>
<div class="t" style="top:1023.21px;font-size:13px;line-height:16.25px;color:#141414;left:1563.00px;transform-origin:0 50%;transform:scaleX(0.915);">2025-09-20</div>
<div class="b" style="left:1663.00px;top:1027.80px;width:68.00px;height:5.00px;background:#ececec;border-radius:3px;"></div>
<div class="t" style="top:1023.21px;font-size:13px;line-height:16.25px;color:#141414;left:1738.40px;transform-origin:0 50%;transform:scaleX(0.99);">0/3</div>
<div class="t" style="top:1023.21px;font-size:13px;line-height:16.25px;color:#141414;left:1843.00px;transform-origin:0 50%;transform:scaleX(0.915);">2025-08-01</div>
<div class="t" style="top:1023.21px;font-size:13px;line-height:16.25px;color:#141414;left:1943.00px;transform-origin:0 50%;transform:scaleX(0.915);">2025-08-31</div>
<div class="t" style="top:1023.21px;font-size:13px;line-height:16.25px;color:#141414;left:2042.80px;transform-origin:0 50%;transform:scaleX(0.915);">2025-09-20</div>
<div class="b" style="left:2143.00px;top:1021.50px;width:499.00px;height:17.60px;background:#90caf9;border-radius:4px;"></div>
<div class="t" style="top:1022.61px;font-size:13px;line-height:16.25px;color:#262626;left:1792.50px;width:1200px;text-align:center;transform-origin:50% 50%;transform:scaleX(0.915);">Nowa</div>
<div class="b" style="left:112.00px;top:1090.00px;width:3258.00px;height:1.00px;background:#e3e3e3;"></div>
<div class="b" style="left:127.00px;top:1063.10px;width:14.00px;height:14.00px;background:#ffffff;border:1.3px solid #a3a3a3;border-radius:2.5px;"></div>
<div class="b" style="left:169.00px;top:1056.10px;width:28.00px;height:28.00px;background:#e3effb;border-radius:50%;"></div>
<svg class="b" style="left:175.00px;top:1062.10px;" width="16" height="16" viewBox="0 0 16 16" fill="none"><rect x="0.5" y="0.5" width="15" height="15" stroke="#1c49ab" stroke-width="1"/><path d="M5.5 0.5V15.5M10.5 0.5V15.5" stroke="#1c49ab" stroke-width="1"/><path d="M2.0 2.5H4.0M2.0 4.5H4.0" stroke="#1c49ab" stroke-width="1"/><path d="M2.2 6.5H3.8" stroke="#1c49ab" stroke-width="0.8" opacity="0.7"/><circle cx="3.0" cy="12.4" r="1.25" stroke="#1c49ab" stroke-width="0.9"/><path d="M7.0 2.5H9.0M7.0 4.5H9.0" stroke="#1c49ab" stroke-width="1"/><path d="M7.2 6.5H8.8" stroke="#1c49ab" stroke-width="0.8" opacity="0.7"/><circle cx="8.0" cy="12.4" r="1.25" stroke="#1c49ab" stroke-width="0.9"/><path d="M12.0 2.5H14.0M12.0 4.5H14.0" stroke="#1c49ab" stroke-width="1"/><path d="M12.2 6.5H13.8" stroke="#1c49ab" stroke-width="0.8" opacity="0.7"/><circle cx="13.0" cy="12.4" r="1.25" stroke="#1c49ab" stroke-width="0.9"/></svg>
<div class="t" style="top:1062.21px;font-size:13px;line-height:16.25px;color:#be1a2c;left:205.00px;transform-origin:0 50%;transform:scaleX(0.975);">2025/08/00009</div>
<div class="t" style="top:1053.53px;font-size:13px;line-height:16px;color:#141414;left:322.80px;transform-origin:0 50%;transform:scaleX(0.915);">ewidencjonowanie danych<br>księgowych</div>
<div class="b" style="left:540.00px;top:1060.90px;width:18.00px;height:20.00px;background:#f2f2f2;border-radius:4px;"></div>
<div class="t" style="top:1062.51px;font-size:12.5px;line-height:15.62px;color:#333333;left:-51.00px;width:1200px;text-align:center;transform-origin:50% 50%;">1</div>
<div class="t" style="top:1053.53px;font-size:13px;line-height:16px;color:#141414;left:643.30px;transform-origin:0 50%;transform:scaleX(0.915);">Saldo i Partnerzy – Kancelaria<br>Księgowa</div>
<div class="t" style="top:1062.21px;font-size:13px;line-height:16.25px;color:#141414;left:843.30px;transform-origin:0 50%;transform:scaleX(0.915);">MedProtect Group</div>
<div class="t" style="top:1062.21px;font-size:13px;line-height:16.25px;color:#141414;left:1043.50px;transform-origin:0 50%;transform:scaleX(0.915);">Miesięczny</div>
<div class="t" style="top:1062.21px;font-size:13px;line-height:16.25px;color:#141414;left:1143.30px;transform-origin:0 50%;transform:scaleX(0.915);">9121846123</div>
<div class="t" style="top:1062.21px;font-size:13px;line-height:16.25px;color:#141414;left:1242.70px;transform-origin:0 50%;transform:scaleX(0.915);">2025</div>
<div class="t" style="top:1062.21px;font-size:13px;line-height:16.25px;color:#141414;left:1303.00px;transform-origin:0 50%;transform:scaleX(0.915);">Sierpień</div>
<div class="t" style="top:1062.21px;font-size:13px;line-height:16.25px;color:#141414;right:1987.00px;text-align:right;transform-origin:100% 50%;transform:scaleX(0.915);">0,00</div>
<div class="t" style="top:1062.21px;font-size:13px;line-height:16.25px;color:#141414;left:1453.00px;transform-origin:0 50%;transform:scaleX(0.915);">2025-08-11 13:13</div>
<div class="t" style="top:1062.21px;font-size:13px;line-height:16.25px;color:#141414;left:1563.00px;transform-origin:0 50%;transform:scaleX(0.915);">2025-09-20</div>
<div class="b" style="left:1663.00px;top:1067.80px;width:68.00px;height:5.00px;background:#ececec;border-radius:3px;"></div>
<div class="t" style="top:1062.21px;font-size:13px;line-height:16.25px;color:#141414;left:1738.40px;transform-origin:0 50%;transform:scaleX(0.99);">0/3</div>
<div class="t" style="top:1062.21px;font-size:13px;line-height:16.25px;color:#141414;left:1843.00px;transform-origin:0 50%;transform:scaleX(0.915);">2025-08-01</div>
<div class="t" style="top:1062.21px;font-size:13px;line-height:16.25px;color:#141414;left:1943.00px;transform-origin:0 50%;transform:scaleX(0.915);">2025-08-31</div>
<div class="t" style="top:1062.21px;font-size:13px;line-height:16.25px;color:#141414;left:2042.80px;transform-origin:0 50%;transform:scaleX(0.915);">2025-09-20</div>
<div class="b" style="left:2143.00px;top:1061.50px;width:499.00px;height:17.60px;background:#90caf9;border-radius:4px;"></div>
<div class="t" style="top:1062.61px;font-size:13px;line-height:16.25px;color:#262626;left:1792.50px;width:1200px;text-align:center;transform-origin:50% 50%;transform:scaleX(0.915);">Nowa</div>
<div class="b" style="left:112.00px;top:1129.00px;width:3258.00px;height:1.00px;background:#e3e3e3;"></div>
<div class="b" style="left:127.00px;top:1102.60px;width:14.00px;height:14.00px;background:#ffffff;border:1.3px solid #a3a3a3;border-radius:2.5px;"></div>
<div class="b" style="left:169.00px;top:1095.60px;width:28.00px;height:28.00px;background:#e3effb;border-radius:50%;"></div>
<svg class="b" style="left:175.00px;top:1101.60px;" width="16" height="16" viewBox="0 0 16 16" fill="none"><rect x="0.5" y="0.5" width="15" height="15" stroke="#1c49ab" stroke-width="1"/><path d="M5.5 0.5V15.5M10.5 0.5V15.5" stroke="#1c49ab" stroke-width="1"/><path d="M2.0 2.5H4.0M2.0 4.5H4.0" stroke="#1c49ab" stroke-width="1"/><path d="M2.2 6.5H3.8" stroke="#1c49ab" stroke-width="0.8" opacity="0.7"/><circle cx="3.0" cy="12.4" r="1.25" stroke="#1c49ab" stroke-width="0.9"/><path d="M7.0 2.5H9.0M7.0 4.5H9.0" stroke="#1c49ab" stroke-width="1"/><path d="M7.2 6.5H8.8" stroke="#1c49ab" stroke-width="0.8" opacity="0.7"/><circle cx="8.0" cy="12.4" r="1.25" stroke="#1c49ab" stroke-width="0.9"/><path d="M12.0 2.5H14.0M12.0 4.5H14.0" stroke="#1c49ab" stroke-width="1"/><path d="M12.2 6.5H13.8" stroke="#1c49ab" stroke-width="0.8" opacity="0.7"/><circle cx="13.0" cy="12.4" r="1.25" stroke="#1c49ab" stroke-width="0.9"/></svg>
<div class="t" style="top:1101.71px;font-size:13px;line-height:16.25px;color:#be1a2c;left:205.00px;transform-origin:0 50%;transform:scaleX(0.975);">2025/08/00010</div>
<div class="t" style="top:1093.03px;font-size:13px;line-height:16px;color:#141414;left:322.80px;transform-origin:0 50%;transform:scaleX(0.915);">ewidencjonowanie danych<br>kadrowych</div>
<div class="b" style="left:540.00px;top:1100.40px;width:18.00px;height:20.00px;background:#f2f2f2;border-radius:4px;"></div>
<div class="t" style="top:1102.01px;font-size:12.5px;line-height:15.62px;color:#333333;left:-51.00px;width:1200px;text-align:center;transform-origin:50% 50%;">1</div>
<div class="t" style="top:1093.03px;font-size:13px;line-height:16px;color:#141414;left:643.30px;transform-origin:0 50%;transform:scaleX(0.915);">Saldo i Partnerzy – Kancelaria<br>Księgowa</div>
<div class="t" style="top:1101.71px;font-size:13px;line-height:16.25px;color:#141414;left:843.30px;transform-origin:0 50%;transform:scaleX(0.915);">MedProtect Group</div>
<div class="t" style="top:1101.71px;font-size:13px;line-height:16.25px;color:#141414;left:1043.50px;transform-origin:0 50%;transform:scaleX(0.915);">Miesięczny</div>
<div class="t" style="top:1101.71px;font-size:13px;line-height:16.25px;color:#141414;left:1143.30px;transform-origin:0 50%;transform:scaleX(0.915);">9121846123</div>
<div class="t" style="top:1101.71px;font-size:13px;line-height:16.25px;color:#141414;left:1242.70px;transform-origin:0 50%;transform:scaleX(0.915);">2025</div>
<div class="t" style="top:1101.71px;font-size:13px;line-height:16.25px;color:#141414;left:1303.00px;transform-origin:0 50%;transform:scaleX(0.915);">Sierpień</div>
<div class="t" style="top:1101.71px;font-size:13px;line-height:16.25px;color:#141414;right:1987.00px;text-align:right;transform-origin:100% 50%;transform:scaleX(0.915);">0,00</div>
<div class="t" style="top:1101.71px;font-size:13px;line-height:16.25px;color:#141414;left:1453.00px;transform-origin:0 50%;transform:scaleX(0.915);">2025-08-11 13:13</div>
<div class="t" style="top:1101.71px;font-size:13px;line-height:16.25px;color:#141414;left:1563.00px;transform-origin:0 50%;transform:scaleX(0.915);">2025-09-20</div>
<div class="b" style="left:1663.00px;top:1107.30px;width:68.00px;height:5.00px;background:#ececec;border-radius:3px;"></div>
<div class="t" style="top:1101.71px;font-size:13px;line-height:16.25px;color:#141414;left:1738.40px;transform-origin:0 50%;transform:scaleX(0.99);">0/3</div>
<div class="t" style="top:1101.71px;font-size:13px;line-height:16.25px;color:#141414;left:1843.00px;transform-origin:0 50%;transform:scaleX(0.915);">2025-08-01</div>
<div class="t" style="top:1101.71px;font-size:13px;line-height:16.25px;color:#141414;left:1943.00px;transform-origin:0 50%;transform:scaleX(0.915);">2025-08-31</div>
<div class="t" style="top:1101.71px;font-size:13px;line-height:16.25px;color:#141414;left:2042.80px;transform-origin:0 50%;transform:scaleX(0.915);">2025-09-20</div>
<div class="b" style="left:2143.00px;top:1101.00px;width:499.00px;height:17.60px;background:#ef9a9a;border-radius:4px;"></div>
<div class="t" style="top:1102.11px;font-size:13px;line-height:16.25px;color:#262626;left:1792.50px;width:1200px;text-align:center;transform-origin:50% 50%;transform:scaleX(0.915);">Anulowana</div>
<div class="b" style="left:112.00px;top:1164.00px;width:3258.00px;height:1.00px;background:#e3e3e3;"></div>
<div class="b" style="left:127.00px;top:1139.60px;width:14.00px;height:14.00px;background:#ffffff;border:1.3px solid #a3a3a3;border-radius:2.5px;"></div>
<div class="b" style="left:169.00px;top:1132.60px;width:28.00px;height:28.00px;background:#e3effb;border-radius:50%;"></div>
<svg class="b" style="left:175.00px;top:1138.60px;" width="16" height="16" viewBox="0 0 16 16" fill="none"><rect x="0.5" y="0.5" width="15" height="15" stroke="#1c49ab" stroke-width="1"/><path d="M5.5 0.5V15.5M10.5 0.5V15.5" stroke="#1c49ab" stroke-width="1"/><path d="M2.0 2.5H4.0M2.0 4.5H4.0" stroke="#1c49ab" stroke-width="1"/><path d="M2.2 6.5H3.8" stroke="#1c49ab" stroke-width="0.8" opacity="0.7"/><circle cx="3.0" cy="12.4" r="1.25" stroke="#1c49ab" stroke-width="0.9"/><path d="M7.0 2.5H9.0M7.0 4.5H9.0" stroke="#1c49ab" stroke-width="1"/><path d="M7.2 6.5H8.8" stroke="#1c49ab" stroke-width="0.8" opacity="0.7"/><circle cx="8.0" cy="12.4" r="1.25" stroke="#1c49ab" stroke-width="0.9"/><path d="M12.0 2.5H14.0M12.0 4.5H14.0" stroke="#1c49ab" stroke-width="1"/><path d="M12.2 6.5H13.8" stroke="#1c49ab" stroke-width="0.8" opacity="0.7"/><circle cx="13.0" cy="12.4" r="1.25" stroke="#1c49ab" stroke-width="0.9"/></svg>
<div class="t" style="top:1138.71px;font-size:13px;line-height:16.25px;color:#be1a2c;left:205.00px;transform-origin:0 50%;transform:scaleX(0.975);">2025/08/00026</div>
<div class="t" style="top:1138.83px;font-size:13px;line-height:16px;color:#141414;left:322.80px;transform-origin:0 50%;transform:scaleX(0.915);">Zmiana administracyjna</div>
<div class="b" style="left:540.00px;top:1137.40px;width:18.00px;height:20.00px;background:#f2f2f2;border-radius:4px;"></div>
<div class="t" style="top:1139.01px;font-size:12.5px;line-height:15.62px;color:#333333;left:-51.00px;width:1200px;text-align:center;transform-origin:50% 50%;">1</div>
<div class="t" style="top:1138.83px;font-size:13px;line-height:16px;color:#141414;left:643.30px;transform-origin:0 50%;transform:scaleX(0.915);">Numeria – Biuro Rachunkowe</div>
<div class="t" style="top:1138.71px;font-size:13px;line-height:16.25px;color:#141414;left:843.30px;transform-origin:0 50%;transform:scaleX(0.915);">TechNova</div>
<div class="t" style="top:1138.71px;font-size:13px;line-height:16.25px;color:#141414;left:1043.50px;transform-origin:0 50%;transform:scaleX(0.915);">Jednorazowy</div>
<div class="t" style="top:1138.71px;font-size:13px;line-height:16.25px;color:#141414;left:1143.30px;transform-origin:0 50%;transform:scaleX(0.915);">6762439850</div>
<div class="t" style="top:1138.71px;font-size:13px;line-height:16.25px;color:#141414;left:1242.70px;transform-origin:0 50%;transform:scaleX(0.915);">2025</div>
<div class="t" style="top:1138.71px;font-size:13px;line-height:16.25px;color:#141414;left:1303.00px;transform-origin:0 50%;transform:scaleX(0.915);">Sierpień</div>
<div class="t" style="top:1138.71px;font-size:13px;line-height:16.25px;color:#141414;right:1987.00px;text-align:right;transform-origin:100% 50%;transform:scaleX(0.915);">100,00</div>
<div class="t" style="top:1138.71px;font-size:13px;line-height:16.25px;color:#141414;left:1453.00px;transform-origin:0 50%;transform:scaleX(0.915);">2025-08-12 08:24</div>
<div class="t" style="top:1138.71px;font-size:13px;line-height:16.25px;color:#141414;left:1563.00px;transform-origin:0 50%;transform:scaleX(0.915);">2025-08-12</div>
<div class="b" style="left:1663.00px;top:1144.30px;width:68.00px;height:5.00px;background:#ececec;border-radius:3px;"></div>
<div class="t" style="top:1138.71px;font-size:13px;line-height:16.25px;color:#141414;left:1738.40px;transform-origin:0 50%;transform:scaleX(0.99);">0/0</div>
<div class="t" style="top:1138.71px;font-size:13px;line-height:16.25px;color:#141414;left:1843.00px;transform-origin:0 50%;transform:scaleX(0.915);">2025-08-11</div>
<div class="t" style="top:1138.71px;font-size:13px;line-height:16.25px;color:#141414;left:1943.00px;transform-origin:0 50%;transform:scaleX(0.915);">2025-08-17</div>
<div class="t" style="top:1138.71px;font-size:13px;line-height:16.25px;color:#141414;left:2042.80px;transform-origin:0 50%;transform:scaleX(0.915);">2025-08-20</div>
<div class="b" style="left:2143.00px;top:1138.00px;width:499.00px;height:17.60px;background:#a5d6a7;border-radius:4px;"></div>
<div class="t" style="top:1139.11px;font-size:13px;line-height:16.25px;color:#262626;left:1792.50px;width:1200px;text-align:center;transform-origin:50% 50%;transform:scaleX(0.915);">Zakończona</div>
<div class="t" style="top:1138.63px;font-size:13px;line-height:16.4px;color:#141414;left:3153.70px;transform-origin:0 50%;transform:scaleX(0.915);">Bilans Team</div>
<svg class="b" style="left:3296.50px;top:1138.70px;" width="19" height="19" viewBox="0 0 19 19" fill="none"><circle cx="9.5" cy="9.5" r="7.6" stroke="#2b2b2b" stroke-width="1.1"/><path d="M4.8 9L8 12.2L13.8 6.6" stroke="#2b2b2b" stroke-width="1.1"/></svg>
<div class="b" style="left:112.00px;top:1201.00px;width:3258.00px;height:1.00px;background:#e3e3e3;"></div>
<div class="b" style="left:127.00px;top:1175.60px;width:14.00px;height:14.00px;background:#ffffff;border:1.3px solid #a3a3a3;border-radius:2.5px;"></div>
<div class="b" style="left:169.00px;top:1168.60px;width:28.00px;height:28.00px;background:#e3effb;border-radius:50%;"></div>
<svg class="b" style="left:175.00px;top:1174.60px;" width="16" height="16" viewBox="0 0 16 16" fill="none"><rect x="0.5" y="0.5" width="15" height="15" stroke="#1c49ab" stroke-width="1"/><path d="M5.5 0.5V15.5M10.5 0.5V15.5" stroke="#1c49ab" stroke-width="1"/><path d="M2.0 2.5H4.0M2.0 4.5H4.0" stroke="#1c49ab" stroke-width="1"/><path d="M2.2 6.5H3.8" stroke="#1c49ab" stroke-width="0.8" opacity="0.7"/><circle cx="3.0" cy="12.4" r="1.25" stroke="#1c49ab" stroke-width="0.9"/><path d="M7.0 2.5H9.0M7.0 4.5H9.0" stroke="#1c49ab" stroke-width="1"/><path d="M7.2 6.5H8.8" stroke="#1c49ab" stroke-width="0.8" opacity="0.7"/><circle cx="8.0" cy="12.4" r="1.25" stroke="#1c49ab" stroke-width="0.9"/><path d="M12.0 2.5H14.0M12.0 4.5H14.0" stroke="#1c49ab" stroke-width="1"/><path d="M12.2 6.5H13.8" stroke="#1c49ab" stroke-width="0.8" opacity="0.7"/><circle cx="13.0" cy="12.4" r="1.25" stroke="#1c49ab" stroke-width="0.9"/></svg>
<div class="t" style="top:1167.61px;font-size:13px;line-height:16.25px;color:#be1a2c;left:205.00px;transform-origin:0 50%;transform:scaleX(0.975);">2025/08/00027</div>
<div class="t" style="top:1184.83px;font-size:9.5px;line-height:11.88px;color:#6a6a6a;font-style:italic;left:206.60px;transform-origin:0 50%;transform:scaleX(1.02);">W edycji · inny użytkownik</div>
<div class="b" style="left:112.00px;top:1169.20px;width:4.00px;height:28.60px;background:#4fc3f7;border-radius:2px;"></div>
<div class="t" style="top:1174.83px;font-size:13px;line-height:16px;color:#141414;left:322.80px;transform-origin:0 50%;transform:scaleX(0.915);">Zmiana formy opodatkowania</div>
<div class="b" style="left:540.00px;top:1173.40px;width:18.00px;height:20.00px;background:#f2f2f2;border-radius:4px;"></div>
<div class="t" style="top:1175.01px;font-size:12.5px;line-height:15.62px;color:#333333;left:-51.00px;width:1200px;text-align:center;transform-origin:50% 50%;">1</div>
<div class="t" style="top:1174.83px;font-size:13px;line-height:16px;color:#141414;left:643.30px;transform-origin:0 50%;transform:scaleX(0.915);">Numeria – Biuro Rachunkowe</div>
<div class="t" style="top:1174.71px;font-size:13px;line-height:16.25px;color:#141414;left:843.30px;transform-origin:0 50%;transform:scaleX(0.915);">TechNova</div>
<div class="t" style="top:1174.71px;font-size:13px;line-height:16.25px;color:#141414;left:1043.50px;transform-origin:0 50%;transform:scaleX(0.915);">Jednorazowy</div>
<div class="t" style="top:1174.71px;font-size:13px;line-height:16.25px;color:#141414;left:1143.30px;transform-origin:0 50%;transform:scaleX(0.915);">6762439850</div>
<div class="t" style="top:1174.71px;font-size:13px;line-height:16.25px;color:#141414;left:1242.70px;transform-origin:0 50%;transform:scaleX(0.915);">2025</div>
<div class="t" style="top:1174.71px;font-size:13px;line-height:16.25px;color:#141414;left:1303.00px;transform-origin:0 50%;transform:scaleX(0.915);">Sierpień</div>
<div class="t" style="top:1174.71px;font-size:13px;line-height:16.25px;color:#141414;right:1987.00px;text-align:right;transform-origin:100% 50%;transform:scaleX(0.915);">0,00</div>
<div class="t" style="top:1174.71px;font-size:13px;line-height:16.25px;color:#141414;left:1453.00px;transform-origin:0 50%;transform:scaleX(0.915);">2025-08-13 12:04</div>
<div class="t" style="top:1174.71px;font-size:13px;line-height:16.25px;color:#141414;left:1563.00px;transform-origin:0 50%;transform:scaleX(0.915);">2025-08-13</div>
<div class="b" style="left:1663.00px;top:1180.30px;width:68.00px;height:5.00px;background:#ececec;border-radius:3px;"></div>
<div class="t" style="top:1174.71px;font-size:13px;line-height:16.25px;color:#141414;left:1738.40px;transform-origin:0 50%;transform:scaleX(0.99);">0/0</div>
<div class="t" style="top:1174.71px;font-size:13px;line-height:16.25px;color:#141414;left:1843.00px;transform-origin:0 50%;transform:scaleX(0.915);">2025-08-01</div>
<div class="t" style="top:1174.71px;font-size:13px;line-height:16.25px;color:#141414;left:1943.00px;transform-origin:0 50%;transform:scaleX(0.915);">2025-08-31</div>
<div class="t" style="top:1174.71px;font-size:13px;line-height:16.25px;color:#141414;left:2042.80px;transform-origin:0 50%;transform:scaleX(0.915);">2025-08-31</div>
<div class="b" style="left:2143.00px;top:1174.00px;width:499.00px;height:17.60px;background:#90caf9;border-radius:4px;"></div>
<div class="t" style="top:1175.11px;font-size:13px;line-height:16.25px;color:#262626;left:1792.50px;width:1200px;text-align:center;transform-origin:50% 50%;transform:scaleX(0.915);">Nowa</div>
<div class="t" style="top:1174.63px;font-size:13px;line-height:16.4px;color:#141414;left:3153.70px;transform-origin:0 50%;transform:scaleX(0.915);">Bilans Team</div>
<div class="b" style="left:3396.50px;top:596.00px;width:14.50px;height:48.50px;background:#fafafa;border:1px solid #dcdcdc;border-radius:5px;"></div>
<svg class="b" style="left:3399.00px;top:613.00px;" width="10" height="12" viewBox="0 0 10 12" fill="none"><path d="M6.5 1.5L2.5 6L6.5 10.5" stroke="#444" stroke-width="1.1"/></svg>
</body></html>
